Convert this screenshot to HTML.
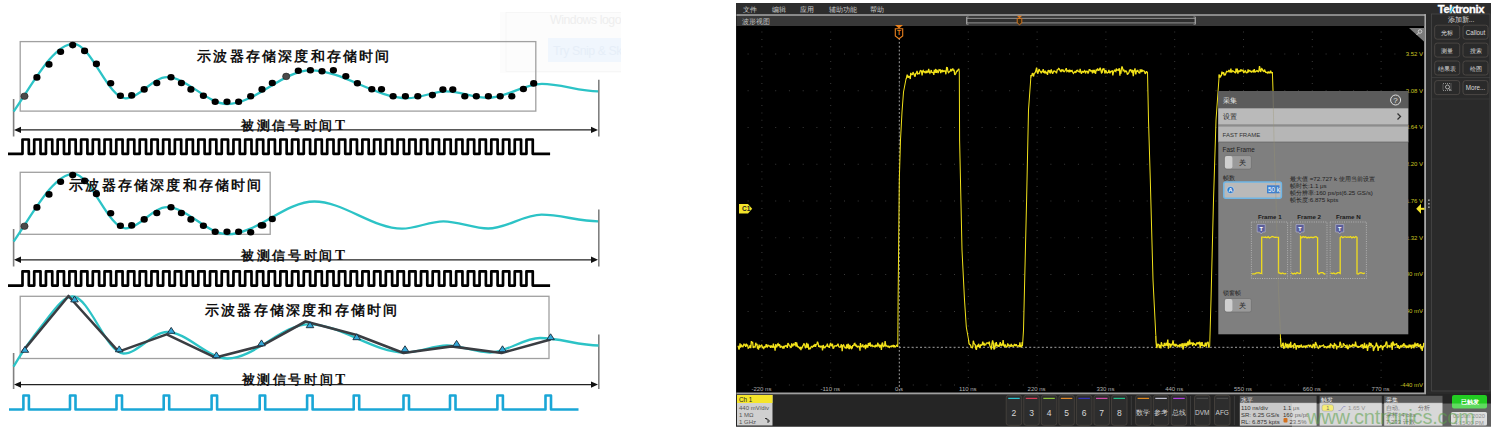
<!DOCTYPE html>
<html><head><meta charset="utf-8"><style>
html,body{margin:0;padding:0;background:#fff;width:1492px;height:433px;overflow:hidden;position:relative}
.cn{font-family:"Liberation Serif",serif;font-weight:bold;fill:#111}
.ui{font-family:"Liberation Sans",sans-serif}
</style></head><body>
<svg width="1492" height="433" style="position:absolute;left:0;top:0"><defs><clipPath id="gp"><rect x="500" y="0" width="121" height="80"/></clipPath></defs><g clip-path="url(#gp)"><rect x="500" y="12" width="130" height="61" fill="#fcfcfc"/><rect x="506" y="12.5" width="130" height="59" fill="none" stroke="#f4f4f4" stroke-width="0.8"/><text x="550" y="24.3" font-family="Liberation Sans" font-size="12.3" letter-spacing="-0.45" fill="#eeeeee">Windows logo key</text><rect x="548" y="38" width="80" height="24" fill="#f0f6fd"/><text x="553" y="54.5" font-family="Liberation Sans" font-size="12.3" letter-spacing="-0.45" fill="#e6eef8">Try Snip &amp; Sketch</text></g><rect x="20.2" y="41.6" width="515.5999999999999" height="69.5" fill="none" stroke="#a0a0a0" stroke-width="1.3"/><line x1="13.6" y1="99" x2="13.6" y2="136.5" stroke="#808080" stroke-width="1.6"/><line x1="598.8" y1="79.7" x2="598.8" y2="136.5" stroke="#808080" stroke-width="1.6"/><line x1="16" y1="129.9" x2="594" y2="129.9" stroke="#222" stroke-width="1.2"/><path d="M14,129.9 L21,126.7 L21,133.1 Z" fill="#111"/><path d="M598,129.9 L591,126.7 L591,133.1 Z" fill="#111"/><path d="M13.6,111.5 C33.6,82.5 53.6,43.8 73.6,43.8 C90.9,43.8 108.2,98.3 125.5,98.3 C139.3,98.3 153.2,77.2 167.0,77.2 C187.1,77.2 207.2,104.1 227.3,104.1 C255.0,104.1 282.8,70.3 310.5,70.3 C342.9,70.3 375.3,98.2 407.7,98.2 C420.6,98.2 433.4,91.3 446.3,91.3 C460.2,91.3 474.0,97.8 487.9,97.8 C505.9,97.8 523.9,83.9 541.9,83.9 C560.6,83.9 579.4,91.4 598.1,91.4" fill="none" stroke="#2cc3c6" stroke-width="2.3"/><ellipse cx="24.5" cy="96.2" rx="3.6" ry="3.3" fill="#4a4a4a" stroke="#222" stroke-width="0.6"/><ellipse cx="36.9" cy="77.4" rx="3.6" ry="3.3" fill="#000" stroke="none" stroke-width="0.6"/><ellipse cx="49" cy="64.4" rx="3.6" ry="3.3" fill="#000" stroke="none" stroke-width="0.6"/><ellipse cx="60.6" cy="51.7" rx="3.6" ry="3.3" fill="#000" stroke="none" stroke-width="0.6"/><ellipse cx="72.7" cy="45.1" rx="3.6" ry="3.3" fill="#000" stroke="none" stroke-width="0.6"/><ellipse cx="84.6" cy="50.9" rx="3.6" ry="3.3" fill="#000" stroke="none" stroke-width="0.6"/><ellipse cx="96.4" cy="63.9" rx="3.6" ry="3.3" fill="#000" stroke="none" stroke-width="0.6"/><ellipse cx="110.7" cy="83.3" rx="3.6" ry="3.3" fill="#000" stroke="none" stroke-width="0.6"/><ellipse cx="120.4" cy="95.8" rx="3.6" ry="3.3" fill="#000" stroke="none" stroke-width="0.6"/><ellipse cx="131.7" cy="95.4" rx="3.6" ry="3.3" fill="#000" stroke="none" stroke-width="0.6"/><ellipse cx="144.2" cy="89.4" rx="3.6" ry="3.3" fill="#000" stroke="none" stroke-width="0.6"/><ellipse cx="156.8" cy="83" rx="3.6" ry="3.3" fill="#000" stroke="none" stroke-width="0.6"/><ellipse cx="171" cy="77.2" rx="3.6" ry="3.3" fill="#000" stroke="none" stroke-width="0.6"/><ellipse cx="181.4" cy="83" rx="3.6" ry="3.3" fill="#000" stroke="none" stroke-width="0.6"/><ellipse cx="190.9" cy="89.4" rx="3.6" ry="3.3" fill="#000" stroke="none" stroke-width="0.6"/><ellipse cx="203.4" cy="95.8" rx="3.6" ry="3.3" fill="#000" stroke="none" stroke-width="0.6"/><ellipse cx="215.2" cy="101.8" rx="3.6" ry="3.3" fill="#000" stroke="none" stroke-width="0.6"/><ellipse cx="227" cy="101.8" rx="3.6" ry="3.3" fill="#000" stroke="none" stroke-width="0.6"/><ellipse cx="238.6" cy="101.8" rx="3.6" ry="3.3" fill="#000" stroke="none" stroke-width="0.6"/><ellipse cx="250.7" cy="96.3" rx="3.6" ry="3.3" fill="#000" stroke="none" stroke-width="0.6"/><ellipse cx="262" cy="89.4" rx="3.6" ry="3.3" fill="#000" stroke="none" stroke-width="0.6"/><ellipse cx="272.3" cy="83" rx="3.6" ry="3.3" fill="#000" stroke="none" stroke-width="0.6"/><ellipse cx="286.2" cy="76.4" rx="3.6" ry="3.3" fill="#4a4a4a" stroke="#222" stroke-width="0.6"/><ellipse cx="298.3" cy="70.8" rx="3.6" ry="3.3" fill="#000" stroke="none" stroke-width="0.6"/><ellipse cx="310.4" cy="70.3" rx="3.6" ry="3.3" fill="#000" stroke="none" stroke-width="0.6"/><ellipse cx="322" cy="71.2" rx="3.6" ry="3.3" fill="#000" stroke="none" stroke-width="0.6"/><ellipse cx="333.4" cy="70.2" rx="3.6" ry="3.3" fill="#000" stroke="none" stroke-width="0.6"/><ellipse cx="345.8" cy="76.3" rx="3.6" ry="3.3" fill="#000" stroke="none" stroke-width="0.6"/><ellipse cx="357.4" cy="83.2" rx="3.6" ry="3.3" fill="#000" stroke="none" stroke-width="0.6"/><ellipse cx="371.8" cy="89.3" rx="3.6" ry="3.3" fill="#000" stroke="none" stroke-width="0.6"/><ellipse cx="381.5" cy="89.3" rx="3.6" ry="3.3" fill="#000" stroke="none" stroke-width="0.6"/><ellipse cx="393.1" cy="96.2" rx="3.6" ry="3.3" fill="#000" stroke="none" stroke-width="0.6"/><ellipse cx="405.4" cy="96.2" rx="3.6" ry="3.3" fill="#000" stroke="none" stroke-width="0.6"/><ellipse cx="417.8" cy="96.2" rx="3.6" ry="3.3" fill="#000" stroke="none" stroke-width="0.6"/><ellipse cx="432.4" cy="95.1" rx="3.6" ry="3.3" fill="#000" stroke="none" stroke-width="0.6"/><ellipse cx="442.9" cy="89.6" rx="3.6" ry="3.3" fill="#000" stroke="none" stroke-width="0.6"/><ellipse cx="452.8" cy="89.6" rx="3.6" ry="3.3" fill="#000" stroke="none" stroke-width="0.6"/><ellipse cx="464.8" cy="96.2" rx="3.6" ry="3.3" fill="#000" stroke="none" stroke-width="0.6"/><ellipse cx="476.3" cy="96.2" rx="3.6" ry="3.3" fill="#000" stroke="none" stroke-width="0.6"/><ellipse cx="488.4" cy="96.2" rx="3.6" ry="3.3" fill="#000" stroke="none" stroke-width="0.6"/><ellipse cx="500.2" cy="96.2" rx="3.6" ry="3.3" fill="#000" stroke="none" stroke-width="0.6"/><ellipse cx="511.8" cy="96.2" rx="3.6" ry="3.3" fill="#000" stroke="none" stroke-width="0.6"/><ellipse cx="523.4" cy="89" rx="3.6" ry="3.3" fill="#000" stroke="none" stroke-width="0.6"/><ellipse cx="533.7" cy="83.4" rx="3.6" ry="3.3" fill="#000" stroke="none" stroke-width="0.6"/><text x="197.3" y="60.6" class="cn" font-size="13.7" letter-spacing="2.2">示波器存储深度和存储时间</text><text x="241.3" y="129.6" class="cn" font-size="13" letter-spacing="2.6">被测信号时间<tspan font-size="15">T</tspan></text><path d="M8,153.8 L22.50,153.8 L22.50,139.5 L28.80,139.5 L28.80,153.8 L34.22,153.8 L34.22,139.5 L40.52,139.5 L40.52,153.8 L45.94,153.8 L45.94,139.5 L52.24,139.5 L52.24,153.8 L57.66,153.8 L57.66,139.5 L63.96,139.5 L63.96,153.8 L69.38,153.8 L69.38,139.5 L75.68,139.5 L75.68,153.8 L81.10,153.8 L81.10,139.5 L87.40,139.5 L87.40,153.8 L92.82,153.8 L92.82,139.5 L99.12,139.5 L99.12,153.8 L104.54,153.8 L104.54,139.5 L110.84,139.5 L110.84,153.8 L116.26,153.8 L116.26,139.5 L122.56,139.5 L122.56,153.8 L127.98,153.8 L127.98,139.5 L134.28,139.5 L134.28,153.8 L139.70,153.8 L139.70,139.5 L146.00,139.5 L146.00,153.8 L151.42,153.8 L151.42,139.5 L157.72,139.5 L157.72,153.8 L163.14,153.8 L163.14,139.5 L169.44,139.5 L169.44,153.8 L174.86,153.8 L174.86,139.5 L181.16,139.5 L181.16,153.8 L186.58,153.8 L186.58,139.5 L192.88,139.5 L192.88,153.8 L198.30,153.8 L198.30,139.5 L204.60,139.5 L204.60,153.8 L210.02,153.8 L210.02,139.5 L216.32,139.5 L216.32,153.8 L221.74,153.8 L221.74,139.5 L228.04,139.5 L228.04,153.8 L233.46,153.8 L233.46,139.5 L239.76,139.5 L239.76,153.8 L245.18,153.8 L245.18,139.5 L251.48,139.5 L251.48,153.8 L256.90,153.8 L256.90,139.5 L263.20,139.5 L263.20,153.8 L268.62,153.8 L268.62,139.5 L274.92,139.5 L274.92,153.8 L280.34,153.8 L280.34,139.5 L286.64,139.5 L286.64,153.8 L292.06,153.8 L292.06,139.5 L298.36,139.5 L298.36,153.8 L303.78,153.8 L303.78,139.5 L310.08,139.5 L310.08,153.8 L315.50,153.8 L315.50,139.5 L321.80,139.5 L321.80,153.8 L327.22,153.8 L327.22,139.5 L333.52,139.5 L333.52,153.8 L338.94,153.8 L338.94,139.5 L345.24,139.5 L345.24,153.8 L350.66,153.8 L350.66,139.5 L356.96,139.5 L356.96,153.8 L362.38,153.8 L362.38,139.5 L368.68,139.5 L368.68,153.8 L374.10,153.8 L374.10,139.5 L380.40,139.5 L380.40,153.8 L385.82,153.8 L385.82,139.5 L392.12,139.5 L392.12,153.8 L397.54,153.8 L397.54,139.5 L403.84,139.5 L403.84,153.8 L409.26,153.8 L409.26,139.5 L415.56,139.5 L415.56,153.8 L420.98,153.8 L420.98,139.5 L427.28,139.5 L427.28,153.8 L432.70,153.8 L432.70,139.5 L439.00,139.5 L439.00,153.8 L444.42,153.8 L444.42,139.5 L450.72,139.5 L450.72,153.8 L456.14,153.8 L456.14,139.5 L462.44,139.5 L462.44,153.8 L467.86,153.8 L467.86,139.5 L474.16,139.5 L474.16,153.8 L479.58,153.8 L479.58,139.5 L485.88,139.5 L485.88,153.8 L491.30,153.8 L491.30,139.5 L497.60,139.5 L497.60,153.8 L503.02,153.8 L503.02,139.5 L509.32,139.5 L509.32,153.8 L514.74,153.8 L514.74,139.5 L521.04,139.5 L521.04,153.8 L526.46,153.8 L526.46,139.5 L532.76,139.5 L532.76,153.8 L550.1,153.8" fill="none" stroke="#000" stroke-width="2.7" stroke-linejoin="round"/><rect x="20.2" y="172.3" width="250.0" height="62.0" fill="none" stroke="#a0a0a0" stroke-width="1.3"/><line x1="13.6" y1="229" x2="13.6" y2="266.5" stroke="#808080" stroke-width="1.6"/><line x1="598.8" y1="209.5" x2="598.8" y2="266.5" stroke="#808080" stroke-width="1.6"/><line x1="16" y1="259.8" x2="594" y2="259.8" stroke="#222" stroke-width="1.2"/><path d="M14,259.8 L21,256.6 L21,263.0 Z" fill="#111"/><path d="M598,259.8 L591,256.6 L591,263.0 Z" fill="#111"/><path d="M13.6,241.5 C33.6,212.5 53.6,173.8 73.6,173.8 C90.9,173.8 108.2,228.3 125.5,228.3 C139.3,228.3 153.2,207.2 167.0,207.2 C187.2,207.2 207.3,234.3 227.5,234.3 C256.4,234.3 285.4,201.5 314.3,201.5 C343.5,201.5 372.8,228.7 402.0,228.7 C415.8,228.7 429.6,221.3 443.4,221.3 C458.3,221.3 473.3,228.5 488.2,228.5 C506.0,228.5 523.8,214.7 541.6,214.7 C560.4,214.7 579.3,221.3 598.1,221.3" fill="none" stroke="#2cc3c6" stroke-width="2.3"/><ellipse cx="24.5" cy="226.2" rx="3.6" ry="3.3" fill="#4a4a4a" stroke="#222" stroke-width="0.6"/><ellipse cx="36.9" cy="207.4" rx="3.6" ry="3.3" fill="#000" stroke="none" stroke-width="0.6"/><ellipse cx="49" cy="194.4" rx="3.6" ry="3.3" fill="#000" stroke="none" stroke-width="0.6"/><ellipse cx="60.6" cy="181.7" rx="3.6" ry="3.3" fill="#000" stroke="none" stroke-width="0.6"/><ellipse cx="72.7" cy="175.1" rx="3.6" ry="3.3" fill="#000" stroke="none" stroke-width="0.6"/><ellipse cx="84.6" cy="180.9" rx="3.6" ry="3.3" fill="#000" stroke="none" stroke-width="0.6"/><ellipse cx="96.4" cy="193.9" rx="3.6" ry="3.3" fill="#000" stroke="none" stroke-width="0.6"/><ellipse cx="110.7" cy="213.3" rx="3.6" ry="3.3" fill="#000" stroke="none" stroke-width="0.6"/><ellipse cx="120.4" cy="225.8" rx="3.6" ry="3.3" fill="#000" stroke="none" stroke-width="0.6"/><ellipse cx="131.7" cy="225.4" rx="3.6" ry="3.3" fill="#000" stroke="none" stroke-width="0.6"/><ellipse cx="144.2" cy="219.4" rx="3.6" ry="3.3" fill="#000" stroke="none" stroke-width="0.6"/><ellipse cx="156.8" cy="213" rx="3.6" ry="3.3" fill="#000" stroke="none" stroke-width="0.6"/><ellipse cx="171" cy="207.2" rx="3.6" ry="3.3" fill="#000" stroke="none" stroke-width="0.6"/><ellipse cx="181.4" cy="213" rx="3.6" ry="3.3" fill="#000" stroke="none" stroke-width="0.6"/><ellipse cx="190.9" cy="219.4" rx="3.6" ry="3.3" fill="#000" stroke="none" stroke-width="0.6"/><ellipse cx="203.4" cy="225.8" rx="3.6" ry="3.3" fill="#000" stroke="none" stroke-width="0.6"/><ellipse cx="215.2" cy="231.8" rx="3.6" ry="3.3" fill="#000" stroke="none" stroke-width="0.6"/><ellipse cx="227" cy="231.8" rx="3.6" ry="3.3" fill="#000" stroke="none" stroke-width="0.6"/><ellipse cx="238.6" cy="231.8" rx="3.6" ry="3.3" fill="#000" stroke="none" stroke-width="0.6"/><ellipse cx="250.7" cy="232.3" rx="3.6" ry="3.3" fill="#000" stroke="none" stroke-width="0.6"/><ellipse cx="262" cy="225.4" rx="4.4" ry="3.3" fill="#000" stroke="none" stroke-width="0.6"/><ellipse cx="272.3" cy="219" rx="3.6" ry="3.3" fill="#000" stroke="none" stroke-width="0.6"/><text x="69.3" y="190.3" class="cn" font-size="13.7" letter-spacing="2.2">示波器存储深度和存储时间</text><text x="241.3" y="259.5" class="cn" font-size="13" letter-spacing="2.6">被测信号时间<tspan font-size="15">T</tspan></text><path d="M8,285.6 L22.50,285.6 L22.50,271.3 L28.80,271.3 L28.80,285.6 L34.22,285.6 L34.22,271.3 L40.52,271.3 L40.52,285.6 L45.94,285.6 L45.94,271.3 L52.24,271.3 L52.24,285.6 L57.66,285.6 L57.66,271.3 L63.96,271.3 L63.96,285.6 L69.38,285.6 L69.38,271.3 L75.68,271.3 L75.68,285.6 L81.10,285.6 L81.10,271.3 L87.40,271.3 L87.40,285.6 L92.82,285.6 L92.82,271.3 L99.12,271.3 L99.12,285.6 L104.54,285.6 L104.54,271.3 L110.84,271.3 L110.84,285.6 L116.26,285.6 L116.26,271.3 L122.56,271.3 L122.56,285.6 L127.98,285.6 L127.98,271.3 L134.28,271.3 L134.28,285.6 L139.70,285.6 L139.70,271.3 L146.00,271.3 L146.00,285.6 L151.42,285.6 L151.42,271.3 L157.72,271.3 L157.72,285.6 L163.14,285.6 L163.14,271.3 L169.44,271.3 L169.44,285.6 L174.86,285.6 L174.86,271.3 L181.16,271.3 L181.16,285.6 L186.58,285.6 L186.58,271.3 L192.88,271.3 L192.88,285.6 L198.30,285.6 L198.30,271.3 L204.60,271.3 L204.60,285.6 L210.02,285.6 L210.02,271.3 L216.32,271.3 L216.32,285.6 L221.74,285.6 L221.74,271.3 L228.04,271.3 L228.04,285.6 L233.46,285.6 L233.46,271.3 L239.76,271.3 L239.76,285.6 L245.18,285.6 L245.18,271.3 L251.48,271.3 L251.48,285.6 L256.90,285.6 L256.90,271.3 L263.20,271.3 L263.20,285.6 L268.62,285.6 L268.62,271.3 L274.92,271.3 L274.92,285.6 L280.34,285.6 L280.34,271.3 L286.64,271.3 L286.64,285.6 L292.06,285.6 L292.06,271.3 L298.36,271.3 L298.36,285.6 L303.78,285.6 L303.78,271.3 L310.08,271.3 L310.08,285.6 L315.50,285.6 L315.50,271.3 L321.80,271.3 L321.80,285.6 L327.22,285.6 L327.22,271.3 L333.52,271.3 L333.52,285.6 L338.94,285.6 L338.94,271.3 L345.24,271.3 L345.24,285.6 L350.66,285.6 L350.66,271.3 L356.96,271.3 L356.96,285.6 L362.38,285.6 L362.38,271.3 L368.68,271.3 L368.68,285.6 L374.10,285.6 L374.10,271.3 L380.40,271.3 L380.40,285.6 L385.82,285.6 L385.82,271.3 L392.12,271.3 L392.12,285.6 L397.54,285.6 L397.54,271.3 L403.84,271.3 L403.84,285.6 L409.26,285.6 L409.26,271.3 L415.56,271.3 L415.56,285.6 L420.98,285.6 L420.98,271.3 L427.28,271.3 L427.28,285.6 L432.70,285.6 L432.70,271.3 L439.00,271.3 L439.00,285.6 L444.42,285.6 L444.42,271.3 L450.72,271.3 L450.72,285.6 L456.14,285.6 L456.14,271.3 L462.44,271.3 L462.44,285.6 L467.86,285.6 L467.86,271.3 L474.16,271.3 L474.16,285.6 L479.58,285.6 L479.58,271.3 L485.88,271.3 L485.88,285.6 L491.30,285.6 L491.30,271.3 L497.60,271.3 L497.60,285.6 L503.02,285.6 L503.02,271.3 L509.32,271.3 L509.32,285.6 L514.74,285.6 L514.74,271.3 L521.04,271.3 L521.04,285.6 L526.46,285.6 L526.46,271.3 L532.76,271.3 L532.76,285.6 L550.1,285.6" fill="none" stroke="#000" stroke-width="2.7" stroke-linejoin="round"/><rect x="20.2" y="296.3" width="528.8" height="62.19999999999999" fill="none" stroke="#a0a0a0" stroke-width="1.3"/><line x1="13.6" y1="353" x2="13.6" y2="389" stroke="#808080" stroke-width="1.6"/><line x1="598.8" y1="334.4" x2="598.8" y2="389" stroke="#808080" stroke-width="1.6"/><line x1="16" y1="384.6" x2="594" y2="384.6" stroke="#222" stroke-width="1.2"/><path d="M14,384.6 L21,381.40000000000003 L21,387.8 Z" fill="#111"/><path d="M598,384.6 L591,381.40000000000003 L591,387.8 Z" fill="#111"/><path d="M13.5,366.6 C23.0,350.5 32.5,337.4 42.0,325.5 C52.2,312.8 62.3,296.5 72.5,296.5 C89.5,296.5 106.5,353.5 123.5,353.5 C138.0,353.5 152.5,332.0 167.0,332.0 C187.2,332.0 207.3,358.5 227.5,358.5 C254.7,358.5 281.8,324.3 309.0,324.3 C341.0,324.3 373.0,352.5 405.0,352.5 C419.0,352.5 433.0,345.5 447.0,345.5 C461.3,345.5 475.7,352.5 490.0,352.5 C506.7,352.5 523.3,338.0 540.0,338.0 C559.5,338.0 579.1,345.5 598.6,345.5" fill="none" stroke="#2cc3c6" stroke-width="2.3"/><polyline points="22.5,351.6 68.5,296 118.6,351.6 166.7,334.4 215.5,357.6 262,345.6 305.6,321.5 356.7,335 403.5,353 451.5,346.4 501.6,353 550.6,339.5" fill="none" stroke="#3a3d42" stroke-width="2.6" stroke-linejoin="round"/><path d="M24.9,346.4 L28.7,352.3 L21.099999999999998,352.3 Z" fill="#33a8d8" stroke="#1a2a38" stroke-width="0.9"/><path d="M74.5,296.0 L78.3,301.90000000000003 L70.7,301.90000000000003 Z" fill="#33a8d8" stroke="#1a2a38" stroke-width="0.9"/><path d="M119.2,345.9 L123.0,351.8 L115.4,351.8 Z" fill="#33a8d8" stroke="#1a2a38" stroke-width="0.9"/><path d="M171.2,327.4 L175.0,333.3 L167.39999999999998,333.3 Z" fill="#33a8d8" stroke="#1a2a38" stroke-width="0.9"/><path d="M216.4,351.9 L220.20000000000002,357.8 L212.6,357.8 Z" fill="#33a8d8" stroke="#1a2a38" stroke-width="0.9"/><path d="M261.5,339.9 L265.3,345.8 L257.7,345.8 Z" fill="#33a8d8" stroke="#1a2a38" stroke-width="0.9"/><path d="M310,321.79999999999995 L313.8,327.7 L306.2,327.7 Z" fill="#33a8d8" stroke="#1a2a38" stroke-width="0.9"/><path d="M356.7,333.79999999999995 L360.5,339.7 L352.9,339.7 Z" fill="#33a8d8" stroke="#1a2a38" stroke-width="0.9"/><path d="M405,345.79999999999995 L408.8,351.7 L401.2,351.7 Z" fill="#33a8d8" stroke="#1a2a38" stroke-width="0.9"/><path d="M456.6,340.4 L460.40000000000003,346.3 L452.8,346.3 Z" fill="#33a8d8" stroke="#1a2a38" stroke-width="0.9"/><path d="M502.5,345.79999999999995 L506.3,351.7 L498.7,351.7 Z" fill="#33a8d8" stroke="#1a2a38" stroke-width="0.9"/><path d="M550.6,333.79999999999995 L554.4,339.7 L546.8000000000001,339.7 Z" fill="#33a8d8" stroke="#1a2a38" stroke-width="0.9"/><text x="205" y="314.5" class="cn" font-size="13.7" letter-spacing="2.2">示波器存储深度和存储时间</text><text x="241.7" y="384.3" class="cn" font-size="13" letter-spacing="2.6">被测信号时间<tspan font-size="15">T</tspan></text><path d="M9,409.5 L23.4,409.5 L23.4,395.5 L28.9,395.5 L28.9,409.5 L70,409.5 L70,395.5 L75.5,395.5 L75.5,409.5 L116.5,409.5 L116.5,395.5 L122.0,395.5 L122.0,409.5 L163.7,409.5 L163.7,395.5 L169.2,395.5 L169.2,409.5 L211.6,409.5 L211.6,395.5 L217.1,395.5 L217.1,409.5 L259.7,409.5 L259.7,395.5 L265.2,395.5 L265.2,409.5 L307.1,409.5 L307.1,395.5 L312.6,395.5 L312.6,409.5 L353.7,409.5 L353.7,395.5 L359.2,395.5 L359.2,409.5 L403.5,409.5 L403.5,395.5 L409.0,395.5 L409.0,409.5 L450,409.5 L450,395.5 L455.5,395.5 L455.5,409.5 L497.4,409.5 L497.4,395.5 L502.9,395.5 L502.9,409.5 L545.5,409.5 L545.5,395.5 L551.0,395.5 L551.0,409.5 L578.5,409.5" fill="none" stroke="#1aa6d6" stroke-width="2.6" stroke-linejoin="round"/><rect x="736" y="3" width="755" height="423.5" fill="#2a2a2a"/><rect x="736" y="3" width="755" height="11" fill="#2d2d2d"/><text x="743.4" y="12" class="ui" font-size="7" fill="#c8c8c8">文件</text><text x="771.6" y="12" class="ui" font-size="7" fill="#c8c8c8">编辑</text><text x="800" y="12" class="ui" font-size="7" fill="#c8c8c8">应用</text><text x="828.5" y="12" class="ui" font-size="7" fill="#c8c8c8">辅助功能</text><text x="869.5" y="12" class="ui" font-size="7" fill="#c8c8c8">帮助</text><rect x="736.4" y="14.2" width="689.6" height="379.8" fill="#000"/><rect x="736.4" y="14.2" width="689.6" height="1.7" fill="#a8a8a8"/><rect x="1424.2" y="14.2" width="1.8" height="379.8" fill="#a8a8a8"/><rect x="736.4" y="15.9" width="687.8" height="10.1" fill="#383838"/><text x="742" y="23.5" class="ui" font-size="6.8" fill="#c0c0c0">波形视图</text><rect x="967" y="18.3" width="228" height="4.6" fill="#2e2e2e" stroke="#a8a8a8" stroke-width="0.8"/><path d="M968.5,17 L966.5,17 L966.5,24.2 L968.5,24.2 M1193.5,17 L1195.5,17 L1195.5,24.2 L1193.5,24.2" fill="none" stroke="#a8a8a8" stroke-width="0.8"/><path d="M1016.8,15.8 L1022.2,15.8 L1019.5,18.2 Z" fill="#e07b20"/><path d="M1017.2,18.5 h4.6 v4.4 l-2.3,1.8 l-2.3,-1.8 z" fill="#3a2a10" stroke="#e07b20" stroke-width="0.9"/><path d="M761.4,31.6h1v1h-1zM761.4,38.9h1v1h-1zM761.4,46.2h1v1h-1zM761.4,53.6h1v1h-1zM761.4,61.0h1v1h-1zM761.4,68.3h1v1h-1zM761.4,75.7h1v1h-1zM761.4,83.0h1v1h-1zM761.4,90.3h1v1h-1zM761.4,97.7h1v1h-1zM761.4,105.0h1v1h-1zM761.4,112.4h1v1h-1zM761.4,119.8h1v1h-1zM761.4,127.1h1v1h-1zM761.4,134.4h1v1h-1zM761.4,141.8h1v1h-1zM761.4,149.2h1v1h-1zM761.4,156.5h1v1h-1zM761.4,163.8h1v1h-1zM761.4,171.2h1v1h-1zM761.4,178.5h1v1h-1zM761.4,185.9h1v1h-1zM761.4,193.2h1v1h-1zM761.4,200.6h1v1h-1zM761.4,207.9h1v1h-1zM761.4,215.3h1v1h-1zM761.4,222.6h1v1h-1zM761.4,230.0h1v1h-1zM761.4,237.3h1v1h-1zM761.4,244.7h1v1h-1zM761.4,252.0h1v1h-1zM761.4,259.4h1v1h-1zM761.4,266.8h1v1h-1zM761.4,274.1h1v1h-1zM761.4,281.4h1v1h-1zM761.4,288.8h1v1h-1zM761.4,296.1h1v1h-1zM761.4,303.5h1v1h-1zM761.4,310.9h1v1h-1zM761.4,318.2h1v1h-1zM761.4,325.6h1v1h-1zM761.4,332.9h1v1h-1zM761.4,340.2h1v1h-1zM761.4,347.6h1v1h-1zM761.4,354.9h1v1h-1zM761.4,362.3h1v1h-1zM761.4,369.7h1v1h-1zM761.4,377.0h1v1h-1zM761.4,384.4h1v1h-1zM761.4,391.7h1v1h-1zM830.2,31.6h1v1h-1zM830.2,38.9h1v1h-1zM830.2,46.2h1v1h-1zM830.2,53.6h1v1h-1zM830.2,61.0h1v1h-1zM830.2,68.3h1v1h-1zM830.2,75.7h1v1h-1zM830.2,83.0h1v1h-1zM830.2,90.3h1v1h-1zM830.2,97.7h1v1h-1zM830.2,105.0h1v1h-1zM830.2,112.4h1v1h-1zM830.2,119.8h1v1h-1zM830.2,127.1h1v1h-1zM830.2,134.4h1v1h-1zM830.2,141.8h1v1h-1zM830.2,149.2h1v1h-1zM830.2,156.5h1v1h-1zM830.2,163.8h1v1h-1zM830.2,171.2h1v1h-1zM830.2,178.5h1v1h-1zM830.2,185.9h1v1h-1zM830.2,193.2h1v1h-1zM830.2,200.6h1v1h-1zM830.2,207.9h1v1h-1zM830.2,215.3h1v1h-1zM830.2,222.6h1v1h-1zM830.2,230.0h1v1h-1zM830.2,237.3h1v1h-1zM830.2,244.7h1v1h-1zM830.2,252.0h1v1h-1zM830.2,259.4h1v1h-1zM830.2,266.8h1v1h-1zM830.2,274.1h1v1h-1zM830.2,281.4h1v1h-1zM830.2,288.8h1v1h-1zM830.2,296.1h1v1h-1zM830.2,303.5h1v1h-1zM830.2,310.9h1v1h-1zM830.2,318.2h1v1h-1zM830.2,325.6h1v1h-1zM830.2,332.9h1v1h-1zM830.2,340.2h1v1h-1zM830.2,347.6h1v1h-1zM830.2,354.9h1v1h-1zM830.2,362.3h1v1h-1zM830.2,369.7h1v1h-1zM830.2,377.0h1v1h-1zM830.2,384.4h1v1h-1zM830.2,391.7h1v1h-1zM899.0,31.6h1v1h-1zM899.0,38.9h1v1h-1zM899.0,46.2h1v1h-1zM899.0,53.6h1v1h-1zM899.0,61.0h1v1h-1zM899.0,68.3h1v1h-1zM899.0,75.7h1v1h-1zM899.0,83.0h1v1h-1zM899.0,90.3h1v1h-1zM899.0,97.7h1v1h-1zM899.0,105.0h1v1h-1zM899.0,112.4h1v1h-1zM899.0,119.8h1v1h-1zM899.0,127.1h1v1h-1zM899.0,134.4h1v1h-1zM899.0,141.8h1v1h-1zM899.0,149.2h1v1h-1zM899.0,156.5h1v1h-1zM899.0,163.8h1v1h-1zM899.0,171.2h1v1h-1zM899.0,178.5h1v1h-1zM899.0,185.9h1v1h-1zM899.0,193.2h1v1h-1zM899.0,200.6h1v1h-1zM899.0,207.9h1v1h-1zM899.0,215.3h1v1h-1zM899.0,222.6h1v1h-1zM899.0,230.0h1v1h-1zM899.0,237.3h1v1h-1zM899.0,244.7h1v1h-1zM899.0,252.0h1v1h-1zM899.0,259.4h1v1h-1zM899.0,266.8h1v1h-1zM899.0,274.1h1v1h-1zM899.0,281.4h1v1h-1zM899.0,288.8h1v1h-1zM899.0,296.1h1v1h-1zM899.0,303.5h1v1h-1zM899.0,310.9h1v1h-1zM899.0,318.2h1v1h-1zM899.0,325.6h1v1h-1zM899.0,332.9h1v1h-1zM899.0,340.2h1v1h-1zM899.0,347.6h1v1h-1zM899.0,354.9h1v1h-1zM899.0,362.3h1v1h-1zM899.0,369.7h1v1h-1zM899.0,377.0h1v1h-1zM899.0,384.4h1v1h-1zM899.0,391.7h1v1h-1zM967.8,31.6h1v1h-1zM967.8,38.9h1v1h-1zM967.8,46.2h1v1h-1zM967.8,53.6h1v1h-1zM967.8,61.0h1v1h-1zM967.8,68.3h1v1h-1zM967.8,75.7h1v1h-1zM967.8,83.0h1v1h-1zM967.8,90.3h1v1h-1zM967.8,97.7h1v1h-1zM967.8,105.0h1v1h-1zM967.8,112.4h1v1h-1zM967.8,119.8h1v1h-1zM967.8,127.1h1v1h-1zM967.8,134.4h1v1h-1zM967.8,141.8h1v1h-1zM967.8,149.2h1v1h-1zM967.8,156.5h1v1h-1zM967.8,163.8h1v1h-1zM967.8,171.2h1v1h-1zM967.8,178.5h1v1h-1zM967.8,185.9h1v1h-1zM967.8,193.2h1v1h-1zM967.8,200.6h1v1h-1zM967.8,207.9h1v1h-1zM967.8,215.3h1v1h-1zM967.8,222.6h1v1h-1zM967.8,230.0h1v1h-1zM967.8,237.3h1v1h-1zM967.8,244.7h1v1h-1zM967.8,252.0h1v1h-1zM967.8,259.4h1v1h-1zM967.8,266.8h1v1h-1zM967.8,274.1h1v1h-1zM967.8,281.4h1v1h-1zM967.8,288.8h1v1h-1zM967.8,296.1h1v1h-1zM967.8,303.5h1v1h-1zM967.8,310.9h1v1h-1zM967.8,318.2h1v1h-1zM967.8,325.6h1v1h-1zM967.8,332.9h1v1h-1zM967.8,340.2h1v1h-1zM967.8,347.6h1v1h-1zM967.8,354.9h1v1h-1zM967.8,362.3h1v1h-1zM967.8,369.7h1v1h-1zM967.8,377.0h1v1h-1zM967.8,384.4h1v1h-1zM967.8,391.7h1v1h-1zM1036.6,31.6h1v1h-1zM1036.6,38.9h1v1h-1zM1036.6,46.2h1v1h-1zM1036.6,53.6h1v1h-1zM1036.6,61.0h1v1h-1zM1036.6,68.3h1v1h-1zM1036.6,75.7h1v1h-1zM1036.6,83.0h1v1h-1zM1036.6,90.3h1v1h-1zM1036.6,97.7h1v1h-1zM1036.6,105.0h1v1h-1zM1036.6,112.4h1v1h-1zM1036.6,119.8h1v1h-1zM1036.6,127.1h1v1h-1zM1036.6,134.4h1v1h-1zM1036.6,141.8h1v1h-1zM1036.6,149.2h1v1h-1zM1036.6,156.5h1v1h-1zM1036.6,163.8h1v1h-1zM1036.6,171.2h1v1h-1zM1036.6,178.5h1v1h-1zM1036.6,185.9h1v1h-1zM1036.6,193.2h1v1h-1zM1036.6,200.6h1v1h-1zM1036.6,207.9h1v1h-1zM1036.6,215.3h1v1h-1zM1036.6,222.6h1v1h-1zM1036.6,230.0h1v1h-1zM1036.6,237.3h1v1h-1zM1036.6,244.7h1v1h-1zM1036.6,252.0h1v1h-1zM1036.6,259.4h1v1h-1zM1036.6,266.8h1v1h-1zM1036.6,274.1h1v1h-1zM1036.6,281.4h1v1h-1zM1036.6,288.8h1v1h-1zM1036.6,296.1h1v1h-1zM1036.6,303.5h1v1h-1zM1036.6,310.9h1v1h-1zM1036.6,318.2h1v1h-1zM1036.6,325.6h1v1h-1zM1036.6,332.9h1v1h-1zM1036.6,340.2h1v1h-1zM1036.6,347.6h1v1h-1zM1036.6,354.9h1v1h-1zM1036.6,362.3h1v1h-1zM1036.6,369.7h1v1h-1zM1036.6,377.0h1v1h-1zM1036.6,384.4h1v1h-1zM1036.6,391.7h1v1h-1zM1105.4,31.6h1v1h-1zM1105.4,38.9h1v1h-1zM1105.4,46.2h1v1h-1zM1105.4,53.6h1v1h-1zM1105.4,61.0h1v1h-1zM1105.4,68.3h1v1h-1zM1105.4,75.7h1v1h-1zM1105.4,83.0h1v1h-1zM1105.4,90.3h1v1h-1zM1105.4,97.7h1v1h-1zM1105.4,105.0h1v1h-1zM1105.4,112.4h1v1h-1zM1105.4,119.8h1v1h-1zM1105.4,127.1h1v1h-1zM1105.4,134.4h1v1h-1zM1105.4,141.8h1v1h-1zM1105.4,149.2h1v1h-1zM1105.4,156.5h1v1h-1zM1105.4,163.8h1v1h-1zM1105.4,171.2h1v1h-1zM1105.4,178.5h1v1h-1zM1105.4,185.9h1v1h-1zM1105.4,193.2h1v1h-1zM1105.4,200.6h1v1h-1zM1105.4,207.9h1v1h-1zM1105.4,215.3h1v1h-1zM1105.4,222.6h1v1h-1zM1105.4,230.0h1v1h-1zM1105.4,237.3h1v1h-1zM1105.4,244.7h1v1h-1zM1105.4,252.0h1v1h-1zM1105.4,259.4h1v1h-1zM1105.4,266.8h1v1h-1zM1105.4,274.1h1v1h-1zM1105.4,281.4h1v1h-1zM1105.4,288.8h1v1h-1zM1105.4,296.1h1v1h-1zM1105.4,303.5h1v1h-1zM1105.4,310.9h1v1h-1zM1105.4,318.2h1v1h-1zM1105.4,325.6h1v1h-1zM1105.4,332.9h1v1h-1zM1105.4,340.2h1v1h-1zM1105.4,347.6h1v1h-1zM1105.4,354.9h1v1h-1zM1105.4,362.3h1v1h-1zM1105.4,369.7h1v1h-1zM1105.4,377.0h1v1h-1zM1105.4,384.4h1v1h-1zM1105.4,391.7h1v1h-1zM1174.2,31.6h1v1h-1zM1174.2,38.9h1v1h-1zM1174.2,46.2h1v1h-1zM1174.2,53.6h1v1h-1zM1174.2,61.0h1v1h-1zM1174.2,68.3h1v1h-1zM1174.2,75.7h1v1h-1zM1174.2,83.0h1v1h-1zM1174.2,90.3h1v1h-1zM1174.2,97.7h1v1h-1zM1174.2,105.0h1v1h-1zM1174.2,112.4h1v1h-1zM1174.2,119.8h1v1h-1zM1174.2,127.1h1v1h-1zM1174.2,134.4h1v1h-1zM1174.2,141.8h1v1h-1zM1174.2,149.2h1v1h-1zM1174.2,156.5h1v1h-1zM1174.2,163.8h1v1h-1zM1174.2,171.2h1v1h-1zM1174.2,178.5h1v1h-1zM1174.2,185.9h1v1h-1zM1174.2,193.2h1v1h-1zM1174.2,200.6h1v1h-1zM1174.2,207.9h1v1h-1zM1174.2,215.3h1v1h-1zM1174.2,222.6h1v1h-1zM1174.2,230.0h1v1h-1zM1174.2,237.3h1v1h-1zM1174.2,244.7h1v1h-1zM1174.2,252.0h1v1h-1zM1174.2,259.4h1v1h-1zM1174.2,266.8h1v1h-1zM1174.2,274.1h1v1h-1zM1174.2,281.4h1v1h-1zM1174.2,288.8h1v1h-1zM1174.2,296.1h1v1h-1zM1174.2,303.5h1v1h-1zM1174.2,310.9h1v1h-1zM1174.2,318.2h1v1h-1zM1174.2,325.6h1v1h-1zM1174.2,332.9h1v1h-1zM1174.2,340.2h1v1h-1zM1174.2,347.6h1v1h-1zM1174.2,354.9h1v1h-1zM1174.2,362.3h1v1h-1zM1174.2,369.7h1v1h-1zM1174.2,377.0h1v1h-1zM1174.2,384.4h1v1h-1zM1174.2,391.7h1v1h-1zM1243.0,31.6h1v1h-1zM1243.0,38.9h1v1h-1zM1243.0,46.2h1v1h-1zM1243.0,53.6h1v1h-1zM1243.0,61.0h1v1h-1zM1243.0,68.3h1v1h-1zM1243.0,75.7h1v1h-1zM1243.0,83.0h1v1h-1zM1243.0,90.3h1v1h-1zM1243.0,97.7h1v1h-1zM1243.0,105.0h1v1h-1zM1243.0,112.4h1v1h-1zM1243.0,119.8h1v1h-1zM1243.0,127.1h1v1h-1zM1243.0,134.4h1v1h-1zM1243.0,141.8h1v1h-1zM1243.0,149.2h1v1h-1zM1243.0,156.5h1v1h-1zM1243.0,163.8h1v1h-1zM1243.0,171.2h1v1h-1zM1243.0,178.5h1v1h-1zM1243.0,185.9h1v1h-1zM1243.0,193.2h1v1h-1zM1243.0,200.6h1v1h-1zM1243.0,207.9h1v1h-1zM1243.0,215.3h1v1h-1zM1243.0,222.6h1v1h-1zM1243.0,230.0h1v1h-1zM1243.0,237.3h1v1h-1zM1243.0,244.7h1v1h-1zM1243.0,252.0h1v1h-1zM1243.0,259.4h1v1h-1zM1243.0,266.8h1v1h-1zM1243.0,274.1h1v1h-1zM1243.0,281.4h1v1h-1zM1243.0,288.8h1v1h-1zM1243.0,296.1h1v1h-1zM1243.0,303.5h1v1h-1zM1243.0,310.9h1v1h-1zM1243.0,318.2h1v1h-1zM1243.0,325.6h1v1h-1zM1243.0,332.9h1v1h-1zM1243.0,340.2h1v1h-1zM1243.0,347.6h1v1h-1zM1243.0,354.9h1v1h-1zM1243.0,362.3h1v1h-1zM1243.0,369.7h1v1h-1zM1243.0,377.0h1v1h-1zM1243.0,384.4h1v1h-1zM1243.0,391.7h1v1h-1zM1311.8,31.6h1v1h-1zM1311.8,38.9h1v1h-1zM1311.8,46.2h1v1h-1zM1311.8,53.6h1v1h-1zM1311.8,61.0h1v1h-1zM1311.8,68.3h1v1h-1zM1311.8,75.7h1v1h-1zM1311.8,83.0h1v1h-1zM1311.8,90.3h1v1h-1zM1311.8,97.7h1v1h-1zM1311.8,105.0h1v1h-1zM1311.8,112.4h1v1h-1zM1311.8,119.8h1v1h-1zM1311.8,127.1h1v1h-1zM1311.8,134.4h1v1h-1zM1311.8,141.8h1v1h-1zM1311.8,149.2h1v1h-1zM1311.8,156.5h1v1h-1zM1311.8,163.8h1v1h-1zM1311.8,171.2h1v1h-1zM1311.8,178.5h1v1h-1zM1311.8,185.9h1v1h-1zM1311.8,193.2h1v1h-1zM1311.8,200.6h1v1h-1zM1311.8,207.9h1v1h-1zM1311.8,215.3h1v1h-1zM1311.8,222.6h1v1h-1zM1311.8,230.0h1v1h-1zM1311.8,237.3h1v1h-1zM1311.8,244.7h1v1h-1zM1311.8,252.0h1v1h-1zM1311.8,259.4h1v1h-1zM1311.8,266.8h1v1h-1zM1311.8,274.1h1v1h-1zM1311.8,281.4h1v1h-1zM1311.8,288.8h1v1h-1zM1311.8,296.1h1v1h-1zM1311.8,303.5h1v1h-1zM1311.8,310.9h1v1h-1zM1311.8,318.2h1v1h-1zM1311.8,325.6h1v1h-1zM1311.8,332.9h1v1h-1zM1311.8,340.2h1v1h-1zM1311.8,347.6h1v1h-1zM1311.8,354.9h1v1h-1zM1311.8,362.3h1v1h-1zM1311.8,369.7h1v1h-1zM1311.8,377.0h1v1h-1zM1311.8,384.4h1v1h-1zM1311.8,391.7h1v1h-1zM1380.6,31.6h1v1h-1zM1380.6,38.9h1v1h-1zM1380.6,46.2h1v1h-1zM1380.6,53.6h1v1h-1zM1380.6,61.0h1v1h-1zM1380.6,68.3h1v1h-1zM1380.6,75.7h1v1h-1zM1380.6,83.0h1v1h-1zM1380.6,90.3h1v1h-1zM1380.6,97.7h1v1h-1zM1380.6,105.0h1v1h-1zM1380.6,112.4h1v1h-1zM1380.6,119.8h1v1h-1zM1380.6,127.1h1v1h-1zM1380.6,134.4h1v1h-1zM1380.6,141.8h1v1h-1zM1380.6,149.2h1v1h-1zM1380.6,156.5h1v1h-1zM1380.6,163.8h1v1h-1zM1380.6,171.2h1v1h-1zM1380.6,178.5h1v1h-1zM1380.6,185.9h1v1h-1zM1380.6,193.2h1v1h-1zM1380.6,200.6h1v1h-1zM1380.6,207.9h1v1h-1zM1380.6,215.3h1v1h-1zM1380.6,222.6h1v1h-1zM1380.6,230.0h1v1h-1zM1380.6,237.3h1v1h-1zM1380.6,244.7h1v1h-1zM1380.6,252.0h1v1h-1zM1380.6,259.4h1v1h-1zM1380.6,266.8h1v1h-1zM1380.6,274.1h1v1h-1zM1380.6,281.4h1v1h-1zM1380.6,288.8h1v1h-1zM1380.6,296.1h1v1h-1zM1380.6,303.5h1v1h-1zM1380.6,310.9h1v1h-1zM1380.6,318.2h1v1h-1zM1380.6,325.6h1v1h-1zM1380.6,332.9h1v1h-1zM1380.6,340.2h1v1h-1zM1380.6,347.6h1v1h-1zM1380.6,354.9h1v1h-1zM1380.6,362.3h1v1h-1zM1380.6,369.7h1v1h-1zM1380.6,377.0h1v1h-1zM1380.6,384.4h1v1h-1zM1380.6,391.7h1v1h-1zM747.6,53.6h1v1h-1zM761.4,53.6h1v1h-1zM775.2,53.6h1v1h-1zM788.9,53.6h1v1h-1zM802.7,53.6h1v1h-1zM816.4,53.6h1v1h-1zM830.2,53.6h1v1h-1zM844.0,53.6h1v1h-1zM857.7,53.6h1v1h-1zM871.5,53.6h1v1h-1zM885.2,53.6h1v1h-1zM899.0,53.6h1v1h-1zM912.8,53.6h1v1h-1zM926.5,53.6h1v1h-1zM940.3,53.6h1v1h-1zM954.0,53.6h1v1h-1zM967.8,53.6h1v1h-1zM981.6,53.6h1v1h-1zM995.3,53.6h1v1h-1zM1009.1,53.6h1v1h-1zM1022.8,53.6h1v1h-1zM1036.6,53.6h1v1h-1zM1050.4,53.6h1v1h-1zM1064.1,53.6h1v1h-1zM1077.9,53.6h1v1h-1zM1091.6,53.6h1v1h-1zM1105.4,53.6h1v1h-1zM1119.2,53.6h1v1h-1zM1132.9,53.6h1v1h-1zM1146.7,53.6h1v1h-1zM1160.4,53.6h1v1h-1zM1174.2,53.6h1v1h-1zM1188.0,53.6h1v1h-1zM1201.7,53.6h1v1h-1zM1215.5,53.6h1v1h-1zM1229.2,53.6h1v1h-1zM1243.0,53.6h1v1h-1zM1256.8,53.6h1v1h-1zM1270.5,53.6h1v1h-1zM1284.3,53.6h1v1h-1zM1298.0,53.6h1v1h-1zM1311.8,53.6h1v1h-1zM1325.6,53.6h1v1h-1zM1339.3,53.6h1v1h-1zM1353.1,53.6h1v1h-1zM1366.8,53.6h1v1h-1zM1380.6,53.6h1v1h-1zM1394.4,53.6h1v1h-1zM1408.1,53.6h1v1h-1zM1421.9,53.6h1v1h-1zM747.6,90.3h1v1h-1zM761.4,90.3h1v1h-1zM775.2,90.3h1v1h-1zM788.9,90.3h1v1h-1zM802.7,90.3h1v1h-1zM816.4,90.3h1v1h-1zM830.2,90.3h1v1h-1zM844.0,90.3h1v1h-1zM857.7,90.3h1v1h-1zM871.5,90.3h1v1h-1zM885.2,90.3h1v1h-1zM899.0,90.3h1v1h-1zM912.8,90.3h1v1h-1zM926.5,90.3h1v1h-1zM940.3,90.3h1v1h-1zM954.0,90.3h1v1h-1zM967.8,90.3h1v1h-1zM981.6,90.3h1v1h-1zM995.3,90.3h1v1h-1zM1009.1,90.3h1v1h-1zM1022.8,90.3h1v1h-1zM1036.6,90.3h1v1h-1zM1050.4,90.3h1v1h-1zM1064.1,90.3h1v1h-1zM1077.9,90.3h1v1h-1zM1091.6,90.3h1v1h-1zM1105.4,90.3h1v1h-1zM1119.2,90.3h1v1h-1zM1132.9,90.3h1v1h-1zM1146.7,90.3h1v1h-1zM1160.4,90.3h1v1h-1zM1174.2,90.3h1v1h-1zM1188.0,90.3h1v1h-1zM1201.7,90.3h1v1h-1zM1215.5,90.3h1v1h-1zM1229.2,90.3h1v1h-1zM1243.0,90.3h1v1h-1zM1256.8,90.3h1v1h-1zM1270.5,90.3h1v1h-1zM1284.3,90.3h1v1h-1zM1298.0,90.3h1v1h-1zM1311.8,90.3h1v1h-1zM1325.6,90.3h1v1h-1zM1339.3,90.3h1v1h-1zM1353.1,90.3h1v1h-1zM1366.8,90.3h1v1h-1zM1380.6,90.3h1v1h-1zM1394.4,90.3h1v1h-1zM1408.1,90.3h1v1h-1zM1421.9,90.3h1v1h-1zM747.6,127.1h1v1h-1zM761.4,127.1h1v1h-1zM775.2,127.1h1v1h-1zM788.9,127.1h1v1h-1zM802.7,127.1h1v1h-1zM816.4,127.1h1v1h-1zM830.2,127.1h1v1h-1zM844.0,127.1h1v1h-1zM857.7,127.1h1v1h-1zM871.5,127.1h1v1h-1zM885.2,127.1h1v1h-1zM899.0,127.1h1v1h-1zM912.8,127.1h1v1h-1zM926.5,127.1h1v1h-1zM940.3,127.1h1v1h-1zM954.0,127.1h1v1h-1zM967.8,127.1h1v1h-1zM981.6,127.1h1v1h-1zM995.3,127.1h1v1h-1zM1009.1,127.1h1v1h-1zM1022.8,127.1h1v1h-1zM1036.6,127.1h1v1h-1zM1050.4,127.1h1v1h-1zM1064.1,127.1h1v1h-1zM1077.9,127.1h1v1h-1zM1091.6,127.1h1v1h-1zM1105.4,127.1h1v1h-1zM1119.2,127.1h1v1h-1zM1132.9,127.1h1v1h-1zM1146.7,127.1h1v1h-1zM1160.4,127.1h1v1h-1zM1174.2,127.1h1v1h-1zM1188.0,127.1h1v1h-1zM1201.7,127.1h1v1h-1zM1215.5,127.1h1v1h-1zM1229.2,127.1h1v1h-1zM1243.0,127.1h1v1h-1zM1256.8,127.1h1v1h-1zM1270.5,127.1h1v1h-1zM1284.3,127.1h1v1h-1zM1298.0,127.1h1v1h-1zM1311.8,127.1h1v1h-1zM1325.6,127.1h1v1h-1zM1339.3,127.1h1v1h-1zM1353.1,127.1h1v1h-1zM1366.8,127.1h1v1h-1zM1380.6,127.1h1v1h-1zM1394.4,127.1h1v1h-1zM1408.1,127.1h1v1h-1zM1421.9,127.1h1v1h-1zM747.6,163.8h1v1h-1zM761.4,163.8h1v1h-1zM775.2,163.8h1v1h-1zM788.9,163.8h1v1h-1zM802.7,163.8h1v1h-1zM816.4,163.8h1v1h-1zM830.2,163.8h1v1h-1zM844.0,163.8h1v1h-1zM857.7,163.8h1v1h-1zM871.5,163.8h1v1h-1zM885.2,163.8h1v1h-1zM899.0,163.8h1v1h-1zM912.8,163.8h1v1h-1zM926.5,163.8h1v1h-1zM940.3,163.8h1v1h-1zM954.0,163.8h1v1h-1zM967.8,163.8h1v1h-1zM981.6,163.8h1v1h-1zM995.3,163.8h1v1h-1zM1009.1,163.8h1v1h-1zM1022.8,163.8h1v1h-1zM1036.6,163.8h1v1h-1zM1050.4,163.8h1v1h-1zM1064.1,163.8h1v1h-1zM1077.9,163.8h1v1h-1zM1091.6,163.8h1v1h-1zM1105.4,163.8h1v1h-1zM1119.2,163.8h1v1h-1zM1132.9,163.8h1v1h-1zM1146.7,163.8h1v1h-1zM1160.4,163.8h1v1h-1zM1174.2,163.8h1v1h-1zM1188.0,163.8h1v1h-1zM1201.7,163.8h1v1h-1zM1215.5,163.8h1v1h-1zM1229.2,163.8h1v1h-1zM1243.0,163.8h1v1h-1zM1256.8,163.8h1v1h-1zM1270.5,163.8h1v1h-1zM1284.3,163.8h1v1h-1zM1298.0,163.8h1v1h-1zM1311.8,163.8h1v1h-1zM1325.6,163.8h1v1h-1zM1339.3,163.8h1v1h-1zM1353.1,163.8h1v1h-1zM1366.8,163.8h1v1h-1zM1380.6,163.8h1v1h-1zM1394.4,163.8h1v1h-1zM1408.1,163.8h1v1h-1zM1421.9,163.8h1v1h-1zM747.6,200.6h1v1h-1zM761.4,200.6h1v1h-1zM775.2,200.6h1v1h-1zM788.9,200.6h1v1h-1zM802.7,200.6h1v1h-1zM816.4,200.6h1v1h-1zM830.2,200.6h1v1h-1zM844.0,200.6h1v1h-1zM857.7,200.6h1v1h-1zM871.5,200.6h1v1h-1zM885.2,200.6h1v1h-1zM899.0,200.6h1v1h-1zM912.8,200.6h1v1h-1zM926.5,200.6h1v1h-1zM940.3,200.6h1v1h-1zM954.0,200.6h1v1h-1zM967.8,200.6h1v1h-1zM981.6,200.6h1v1h-1zM995.3,200.6h1v1h-1zM1009.1,200.6h1v1h-1zM1022.8,200.6h1v1h-1zM1036.6,200.6h1v1h-1zM1050.4,200.6h1v1h-1zM1064.1,200.6h1v1h-1zM1077.9,200.6h1v1h-1zM1091.6,200.6h1v1h-1zM1105.4,200.6h1v1h-1zM1119.2,200.6h1v1h-1zM1132.9,200.6h1v1h-1zM1146.7,200.6h1v1h-1zM1160.4,200.6h1v1h-1zM1174.2,200.6h1v1h-1zM1188.0,200.6h1v1h-1zM1201.7,200.6h1v1h-1zM1215.5,200.6h1v1h-1zM1229.2,200.6h1v1h-1zM1243.0,200.6h1v1h-1zM1256.8,200.6h1v1h-1zM1270.5,200.6h1v1h-1zM1284.3,200.6h1v1h-1zM1298.0,200.6h1v1h-1zM1311.8,200.6h1v1h-1zM1325.6,200.6h1v1h-1zM1339.3,200.6h1v1h-1zM1353.1,200.6h1v1h-1zM1366.8,200.6h1v1h-1zM1380.6,200.6h1v1h-1zM1394.4,200.6h1v1h-1zM1408.1,200.6h1v1h-1zM1421.9,200.6h1v1h-1zM747.6,237.3h1v1h-1zM761.4,237.3h1v1h-1zM775.2,237.3h1v1h-1zM788.9,237.3h1v1h-1zM802.7,237.3h1v1h-1zM816.4,237.3h1v1h-1zM830.2,237.3h1v1h-1zM844.0,237.3h1v1h-1zM857.7,237.3h1v1h-1zM871.5,237.3h1v1h-1zM885.2,237.3h1v1h-1zM899.0,237.3h1v1h-1zM912.8,237.3h1v1h-1zM926.5,237.3h1v1h-1zM940.3,237.3h1v1h-1zM954.0,237.3h1v1h-1zM967.8,237.3h1v1h-1zM981.6,237.3h1v1h-1zM995.3,237.3h1v1h-1zM1009.1,237.3h1v1h-1zM1022.8,237.3h1v1h-1zM1036.6,237.3h1v1h-1zM1050.4,237.3h1v1h-1zM1064.1,237.3h1v1h-1zM1077.9,237.3h1v1h-1zM1091.6,237.3h1v1h-1zM1105.4,237.3h1v1h-1zM1119.2,237.3h1v1h-1zM1132.9,237.3h1v1h-1zM1146.7,237.3h1v1h-1zM1160.4,237.3h1v1h-1zM1174.2,237.3h1v1h-1zM1188.0,237.3h1v1h-1zM1201.7,237.3h1v1h-1zM1215.5,237.3h1v1h-1zM1229.2,237.3h1v1h-1zM1243.0,237.3h1v1h-1zM1256.8,237.3h1v1h-1zM1270.5,237.3h1v1h-1zM1284.3,237.3h1v1h-1zM1298.0,237.3h1v1h-1zM1311.8,237.3h1v1h-1zM1325.6,237.3h1v1h-1zM1339.3,237.3h1v1h-1zM1353.1,237.3h1v1h-1zM1366.8,237.3h1v1h-1zM1380.6,237.3h1v1h-1zM1394.4,237.3h1v1h-1zM1408.1,237.3h1v1h-1zM1421.9,237.3h1v1h-1zM747.6,274.1h1v1h-1zM761.4,274.1h1v1h-1zM775.2,274.1h1v1h-1zM788.9,274.1h1v1h-1zM802.7,274.1h1v1h-1zM816.4,274.1h1v1h-1zM830.2,274.1h1v1h-1zM844.0,274.1h1v1h-1zM857.7,274.1h1v1h-1zM871.5,274.1h1v1h-1zM885.2,274.1h1v1h-1zM899.0,274.1h1v1h-1zM912.8,274.1h1v1h-1zM926.5,274.1h1v1h-1zM940.3,274.1h1v1h-1zM954.0,274.1h1v1h-1zM967.8,274.1h1v1h-1zM981.6,274.1h1v1h-1zM995.3,274.1h1v1h-1zM1009.1,274.1h1v1h-1zM1022.8,274.1h1v1h-1zM1036.6,274.1h1v1h-1zM1050.4,274.1h1v1h-1zM1064.1,274.1h1v1h-1zM1077.9,274.1h1v1h-1zM1091.6,274.1h1v1h-1zM1105.4,274.1h1v1h-1zM1119.2,274.1h1v1h-1zM1132.9,274.1h1v1h-1zM1146.7,274.1h1v1h-1zM1160.4,274.1h1v1h-1zM1174.2,274.1h1v1h-1zM1188.0,274.1h1v1h-1zM1201.7,274.1h1v1h-1zM1215.5,274.1h1v1h-1zM1229.2,274.1h1v1h-1zM1243.0,274.1h1v1h-1zM1256.8,274.1h1v1h-1zM1270.5,274.1h1v1h-1zM1284.3,274.1h1v1h-1zM1298.0,274.1h1v1h-1zM1311.8,274.1h1v1h-1zM1325.6,274.1h1v1h-1zM1339.3,274.1h1v1h-1zM1353.1,274.1h1v1h-1zM1366.8,274.1h1v1h-1zM1380.6,274.1h1v1h-1zM1394.4,274.1h1v1h-1zM1408.1,274.1h1v1h-1zM1421.9,274.1h1v1h-1zM747.6,310.9h1v1h-1zM761.4,310.9h1v1h-1zM775.2,310.9h1v1h-1zM788.9,310.9h1v1h-1zM802.7,310.9h1v1h-1zM816.4,310.9h1v1h-1zM830.2,310.9h1v1h-1zM844.0,310.9h1v1h-1zM857.7,310.9h1v1h-1zM871.5,310.9h1v1h-1zM885.2,310.9h1v1h-1zM899.0,310.9h1v1h-1zM912.8,310.9h1v1h-1zM926.5,310.9h1v1h-1zM940.3,310.9h1v1h-1zM954.0,310.9h1v1h-1zM967.8,310.9h1v1h-1zM981.6,310.9h1v1h-1zM995.3,310.9h1v1h-1zM1009.1,310.9h1v1h-1zM1022.8,310.9h1v1h-1zM1036.6,310.9h1v1h-1zM1050.4,310.9h1v1h-1zM1064.1,310.9h1v1h-1zM1077.9,310.9h1v1h-1zM1091.6,310.9h1v1h-1zM1105.4,310.9h1v1h-1zM1119.2,310.9h1v1h-1zM1132.9,310.9h1v1h-1zM1146.7,310.9h1v1h-1zM1160.4,310.9h1v1h-1zM1174.2,310.9h1v1h-1zM1188.0,310.9h1v1h-1zM1201.7,310.9h1v1h-1zM1215.5,310.9h1v1h-1zM1229.2,310.9h1v1h-1zM1243.0,310.9h1v1h-1zM1256.8,310.9h1v1h-1zM1270.5,310.9h1v1h-1zM1284.3,310.9h1v1h-1zM1298.0,310.9h1v1h-1zM1311.8,310.9h1v1h-1zM1325.6,310.9h1v1h-1zM1339.3,310.9h1v1h-1zM1353.1,310.9h1v1h-1zM1366.8,310.9h1v1h-1zM1380.6,310.9h1v1h-1zM1394.4,310.9h1v1h-1zM1408.1,310.9h1v1h-1zM1421.9,310.9h1v1h-1zM747.6,347.6h1v1h-1zM761.4,347.6h1v1h-1zM775.2,347.6h1v1h-1zM788.9,347.6h1v1h-1zM802.7,347.6h1v1h-1zM816.4,347.6h1v1h-1zM830.2,347.6h1v1h-1zM844.0,347.6h1v1h-1zM857.7,347.6h1v1h-1zM871.5,347.6h1v1h-1zM885.2,347.6h1v1h-1zM899.0,347.6h1v1h-1zM912.8,347.6h1v1h-1zM926.5,347.6h1v1h-1zM940.3,347.6h1v1h-1zM954.0,347.6h1v1h-1zM967.8,347.6h1v1h-1zM981.6,347.6h1v1h-1zM995.3,347.6h1v1h-1zM1009.1,347.6h1v1h-1zM1022.8,347.6h1v1h-1zM1036.6,347.6h1v1h-1zM1050.4,347.6h1v1h-1zM1064.1,347.6h1v1h-1zM1077.9,347.6h1v1h-1zM1091.6,347.6h1v1h-1zM1105.4,347.6h1v1h-1zM1119.2,347.6h1v1h-1zM1132.9,347.6h1v1h-1zM1146.7,347.6h1v1h-1zM1160.4,347.6h1v1h-1zM1174.2,347.6h1v1h-1zM1188.0,347.6h1v1h-1zM1201.7,347.6h1v1h-1zM1215.5,347.6h1v1h-1zM1229.2,347.6h1v1h-1zM1243.0,347.6h1v1h-1zM1256.8,347.6h1v1h-1zM1270.5,347.6h1v1h-1zM1284.3,347.6h1v1h-1zM1298.0,347.6h1v1h-1zM1311.8,347.6h1v1h-1zM1325.6,347.6h1v1h-1zM1339.3,347.6h1v1h-1zM1353.1,347.6h1v1h-1zM1366.8,347.6h1v1h-1zM1380.6,347.6h1v1h-1zM1394.4,347.6h1v1h-1zM1408.1,347.6h1v1h-1zM1421.9,347.6h1v1h-1zM747.6,384.4h1v1h-1zM761.4,384.4h1v1h-1zM775.2,384.4h1v1h-1zM788.9,384.4h1v1h-1zM802.7,384.4h1v1h-1zM816.4,384.4h1v1h-1zM830.2,384.4h1v1h-1zM844.0,384.4h1v1h-1zM857.7,384.4h1v1h-1zM871.5,384.4h1v1h-1zM885.2,384.4h1v1h-1zM899.0,384.4h1v1h-1zM912.8,384.4h1v1h-1zM926.5,384.4h1v1h-1zM940.3,384.4h1v1h-1zM954.0,384.4h1v1h-1zM967.8,384.4h1v1h-1zM981.6,384.4h1v1h-1zM995.3,384.4h1v1h-1zM1009.1,384.4h1v1h-1zM1022.8,384.4h1v1h-1zM1036.6,384.4h1v1h-1zM1050.4,384.4h1v1h-1zM1064.1,384.4h1v1h-1zM1077.9,384.4h1v1h-1zM1091.6,384.4h1v1h-1zM1105.4,384.4h1v1h-1zM1119.2,384.4h1v1h-1zM1132.9,384.4h1v1h-1zM1146.7,384.4h1v1h-1zM1160.4,384.4h1v1h-1zM1174.2,384.4h1v1h-1zM1188.0,384.4h1v1h-1zM1201.7,384.4h1v1h-1zM1215.5,384.4h1v1h-1zM1229.2,384.4h1v1h-1zM1243.0,384.4h1v1h-1zM1256.8,384.4h1v1h-1zM1270.5,384.4h1v1h-1zM1284.3,384.4h1v1h-1zM1298.0,384.4h1v1h-1zM1311.8,384.4h1v1h-1zM1325.6,384.4h1v1h-1zM1339.3,384.4h1v1h-1zM1353.1,384.4h1v1h-1zM1366.8,384.4h1v1h-1zM1380.6,384.4h1v1h-1zM1394.4,384.4h1v1h-1zM1408.1,384.4h1v1h-1zM1421.9,384.4h1v1h-1z" fill="#3a3a3a"/><line x1="899.3" y1="38" x2="899.3" y2="392" stroke="#a0a0a0" stroke-width="1" stroke-dasharray="1.8,2.1"/><line x1="899" y1="347.3" x2="1424" y2="347.3" stroke="#a0a0a0" stroke-width="1" stroke-dasharray="2,2.2"/><polyline points="738.0,345.7 738.4,346.9 739.0,349.6 739.6,347.4 740.0,343.3 740.5,347.5 741.3,344.6 741.7,345.3 742.2,346.6 743.0,346.8 743.6,345.1 744.0,343.8 744.5,345.4 745.2,344.5 745.7,346.8 746.3,343.6 747.0,345.9 747.5,344.7 748.2,348.2 748.9,347.7 749.5,347.1 750.1,345.1 750.7,348.2 751.4,341.1 752.0,343.0 752.6,341.9 753.2,347.9 753.7,346.6 754.4,347.0 755.1,347.0 755.7,342.8 756.4,345.1 757.0,343.9 757.5,348.8 758.0,346.3 758.5,349.7 759.1,344.6 759.7,347.7 760.4,345.9 761.1,345.6 761.8,344.8 762.4,348.1 762.9,346.4 763.3,347.9 763.8,348.5 764.5,347.0 765.0,346.1 765.5,347.6 766.2,344.2 766.7,346.5 767.2,347.0 768.0,345.2 768.4,345.7 769.2,346.0 769.9,346.0 770.6,347.7 771.3,345.5 772.1,347.1 772.8,347.2 773.4,343.6 773.8,347.4 774.5,346.3 775.1,350.6 775.6,344.2 776.1,346.5 776.9,347.2 777.4,344.4 778.1,343.7 778.8,346.1 779.5,344.2 780.2,347.7 781.0,345.8 781.5,346.8 782.2,346.8 782.9,348.5 783.5,345.8 783.9,348.5 784.7,345.7 785.4,346.6 785.9,345.1 786.6,346.0 787.3,347.8 787.9,343.0 788.7,344.3 789.3,345.8 789.8,346.0 790.5,347.0 791.1,347.8 791.7,343.4 792.3,345.1 792.8,346.4 793.5,344.1 794.1,344.6 794.8,344.8 795.4,342.2 796.1,346.6 796.6,342.4 797.1,344.7 797.7,347.2 798.3,346.6 799.1,347.6 799.6,348.3 800.3,346.9 800.9,350.1 801.6,347.0 802.2,347.6 802.7,346.0 803.3,345.5 803.8,343.4 804.6,344.7 805.4,348.1 806.1,346.9 806.6,342.9 807.1,347.8 807.8,343.8 808.3,345.0 808.8,349.6 809.5,347.8 810.3,349.1 810.8,347.4 811.6,346.0 812.1,347.0 812.5,347.2 813.1,346.4 813.6,345.1 814.0,346.1 814.5,345.9 815.0,344.0 815.5,346.8 816.2,344.5 816.8,344.3 817.5,341.7 818.2,343.7 818.7,347.0 819.3,346.1 820.1,347.1 820.7,345.9 821.3,347.3 821.9,345.7 822.5,350.3 823.3,345.0 823.8,347.5 824.4,347.2 825.0,348.0 825.5,346.4 826.0,346.2 826.6,346.1 827.4,343.7 827.9,347.0 828.6,345.9 829.3,347.9 830.0,344.6 830.6,343.0 831.3,346.0 832.1,345.1 832.5,343.8 833.0,348.6 833.7,348.0 834.4,346.0 835.0,346.1 835.7,345.8 836.2,345.6 836.7,346.0 837.5,345.0 838.0,343.6 838.7,346.4 839.1,346.9 839.6,347.1 840.1,347.3 840.7,346.6 841.2,344.3 841.7,345.9 842.2,351.1 842.8,345.6 843.6,344.9 844.3,346.5 844.9,347.4 845.4,347.7 846.0,348.1 846.8,344.4 847.2,348.0 847.7,346.1 848.3,343.7 848.9,349.0 849.4,348.4 849.9,344.9 850.5,348.3 851.1,346.1 851.5,348.6 852.3,348.0 852.8,345.0 853.5,346.0 854.3,343.6 854.9,343.4 855.3,345.9 856.0,344.3 856.4,346.9 856.9,345.7 857.6,347.4 858.2,345.9 858.7,346.6 859.5,347.0 860.0,350.7 860.4,343.0 860.9,345.7 861.4,346.7 862.1,346.1 862.8,344.4 863.3,347.3 863.8,346.6 864.4,346.9 864.9,345.2 865.5,349.2 865.9,344.4 866.6,347.6 867.0,345.0 867.8,347.6 868.3,343.2 868.8,343.6 869.4,345.7 870.1,342.3 870.8,346.7 871.6,345.2 872.1,345.0 872.8,346.6 873.4,346.5 873.9,345.9 874.5,346.0 875.1,347.5 875.6,344.8 876.3,346.0 877.0,346.4 877.5,344.2 877.9,342.8 878.5,345.6 879.2,345.1 879.7,347.5 880.2,345.8 880.9,345.0 881.4,350.0 881.9,344.1 882.5,342.6 883.3,346.7 883.8,346.5 884.6,345.5 885.1,341.1 885.9,346.1 886.4,345.7 887.0,346.2 887.5,346.2 888.0,347.2 888.7,345.8 889.3,347.9 890.0,346.7 890.6,346.4 891.3,345.9 891.7,346.7 892.2,346.2 893.0,345.4 893.6,347.2 894.3,345.1 895.0,347.3 895.6,346.4 896.2,346.0 897.0,345.1 897.6,346.9" fill="none" stroke="#f2e21a" stroke-width="1.3" stroke-linejoin="miter" stroke-miterlimit="2"/><polyline points="897.6,346.9 897.8,346.0 898.1,300.0 899.3,180.0 900.5,140.0 902.0,112.0 903.5,92.0 906.0,79.0" fill="none" stroke="#f2e21a" stroke-width="1.0" stroke-linejoin="miter" stroke-miterlimit="2"/><polyline points="906.0,79.0 906.5,77.9 907.2,74.6 907.7,76.1 908.2,77.8 908.9,76.3 909.5,76.6 910.3,79.0 910.7,72.8 911.3,75.0 911.9,73.7 912.5,75.0 913.0,72.0 913.5,73.4 914.0,73.9 914.5,76.0 915.1,76.6 915.9,72.8 916.5,73.5 917.0,70.8 917.7,74.0 918.2,73.7 918.9,73.4 919.4,73.6 920.1,71.1 920.6,70.5 921.1,70.8 921.6,71.7 922.1,75.3 922.7,71.0 923.2,70.5 923.8,71.9 924.4,71.6 924.8,72.4 925.4,73.2 926.1,70.6 926.7,73.0 927.5,70.7 928.0,72.7 928.7,68.9 929.5,72.5 929.9,73.1 930.7,71.5 931.3,70.1 931.8,72.5 932.6,72.6 933.4,72.4 933.8,75.0 934.3,69.9 934.8,73.0 935.3,70.2 935.8,69.0 936.3,72.9 936.9,69.9 937.4,71.1 938.1,73.1 938.5,71.8 939.0,69.8 939.5,70.2 940.2,69.4 940.7,73.1 941.4,70.2 942.1,71.4 942.6,70.6 943.1,71.4 943.7,70.9 944.2,71.3 944.9,70.8 945.4,71.3 945.9,74.3 946.6,67.5 947.4,67.7 947.9,71.5 948.6,72.5 949.1,71.8 949.6,71.6 950.4,70.6 950.9,68.9 951.4,71.3 952.1,70.0 952.8,68.5 953.4,70.4 954.1,70.3 954.8,74.9 955.4,74.1 955.9,73.2 956.6,71.2 957.1,71.3 957.6,70.8 958.3,69.5 958.8,69.2 959.2,70.2" fill="none" stroke="#f2e21a" stroke-width="1.3" stroke-linejoin="miter" stroke-miterlimit="2"/><polyline points="959.2,70.2 959.3,72.0 959.6,140.0 962.0,250.0 964.5,300.0 966.3,327.0 968.6,340.0" fill="none" stroke="#f2e21a" stroke-width="1.0" stroke-linejoin="miter" stroke-miterlimit="2"/><polyline points="968.6,340.0 969.0,343.6 969.5,344.4 970.0,344.5 970.6,345.2 971.1,347.1 971.7,347.5 972.2,347.8 972.8,346.9 973.3,340.7 974.0,343.3 974.6,344.2 975.2,344.9 975.8,348.5 976.4,349.8 977.0,345.9 977.4,345.5 978.1,347.0 978.6,343.8 979.3,346.2 980.0,348.1 980.6,344.9 981.2,344.9 981.6,345.6 982.3,343.7 982.8,341.7 983.4,345.3 984.0,342.8 984.5,345.0 985.0,344.6 985.8,344.8 986.3,343.3 987.1,343.0 987.9,342.9 988.6,343.7 989.3,341.6 989.8,345.4 990.5,347.1 991.0,347.9 991.4,349.5 991.9,343.9 992.6,340.4 993.2,342.7 993.9,349.4 994.7,348.4 995.2,342.7 995.6,346.6 996.3,342.2 996.8,345.4 997.3,345.3 997.9,346.1 998.6,345.0 999.1,346.8 999.8,343.9 1000.3,342.1 1001.0,346.0 1001.5,345.3 1002.0,343.7 1002.5,345.5 1003.1,340.0 1003.8,345.6 1004.5,346.7 1005.2,344.5 1005.8,346.0 1006.5,347.5 1007.2,346.3 1007.7,343.4 1008.2,345.8 1008.6,345.2 1009.2,346.1 1010.0,345.0 1010.7,346.7 1011.3,343.9 1012.0,346.1 1012.7,345.7 1013.4,346.4 1013.9,345.8 1014.5,344.0 1015.2,345.4 1015.7,345.6 1016.2,344.3 1016.9,345.8 1017.7,346.2 1018.4,345.8 1018.9,345.6 1019.4,347.1 1019.9,342.3 1020.5,346.6 1021.1,346.3 1021.7,346.6 1022.3,342.2" fill="none" stroke="#f2e21a" stroke-width="1.3" stroke-linejoin="miter" stroke-miterlimit="2"/><polyline points="1022.3,342.2 1022.5,346.0 1023.5,330.0 1026.6,200.0 1028.5,110.0 1030.8,78.0" fill="none" stroke="#f2e21a" stroke-width="1.0" stroke-linejoin="miter" stroke-miterlimit="2"/><polyline points="1030.8,78.0 1031.0,75.1 1031.7,76.1 1032.4,73.1 1033.0,74.2 1033.6,76.5 1034.2,73.4 1034.8,73.0 1035.4,72.0 1036.0,70.1 1036.6,67.7 1037.2,72.6 1037.9,73.5 1038.5,70.8 1039.2,69.1 1039.8,71.0 1040.6,71.7 1041.3,73.3 1042.1,70.9 1042.6,71.9 1043.2,69.2 1043.7,72.3 1044.4,72.8 1045.1,70.6 1045.6,72.9 1046.2,73.0 1046.9,71.8 1047.5,74.9 1048.2,70.0 1048.7,71.4 1049.2,71.9 1049.8,70.3 1050.2,73.5 1050.8,71.2 1051.3,69.4 1051.9,72.1 1052.6,73.7 1053.3,72.1 1054.0,70.9 1054.8,71.0 1055.3,71.8 1056.0,71.7 1056.5,73.3 1057.2,69.8 1057.9,69.7 1058.7,68.5 1059.3,68.9 1060.1,70.7 1060.6,71.3 1061.0,72.0 1061.5,69.5 1062.2,71.4 1062.9,69.4 1063.7,71.6 1064.2,71.8 1064.9,70.9 1065.5,69.8 1066.3,68.2 1066.9,71.5 1067.5,71.0 1068.3,70.1 1069.0,72.4 1069.5,69.6 1070.1,72.1 1070.6,70.1 1071.4,71.2 1072.1,70.6 1072.7,72.3 1073.4,73.4 1074.1,72.3 1074.6,72.1 1075.2,71.2 1075.9,72.9 1076.6,70.1 1077.2,70.8 1077.8,70.3 1078.3,71.4 1079.0,71.6 1079.6,72.3 1080.1,68.9 1080.6,70.6 1081.4,73.8 1082.0,71.9 1082.7,71.4 1083.2,72.6 1084.0,71.3 1084.6,70.6 1085.1,71.5 1085.5,73.4 1086.3,71.3 1087.0,71.4 1087.5,71.4 1088.0,73.6 1088.7,72.0 1089.2,69.6 1089.9,69.6 1090.7,71.1 1091.4,71.0 1091.8,70.3 1092.5,73.4 1093.0,69.9 1093.6,72.6 1094.3,69.8 1094.9,72.8 1095.6,73.6 1096.1,69.6 1096.9,70.4 1097.6,68.6 1098.3,70.2 1099.0,70.5 1099.7,68.7 1100.2,67.7 1100.7,69.5 1101.5,72.9 1102.2,72.3 1102.7,68.5 1103.4,69.9 1103.9,68.3 1104.6,71.9 1105.1,73.5 1105.7,70.2 1106.4,71.4 1107.0,73.4 1107.5,72.6 1108.3,72.5 1108.9,70.0 1109.4,72.1 1110.0,73.2 1110.6,71.5 1111.2,71.6 1111.8,71.4 1112.3,70.4 1112.8,75.5 1113.4,72.1 1113.9,71.5 1114.6,69.7 1115.3,71.2 1115.8,71.6 1116.3,68.5 1117.0,70.2 1117.5,70.0 1118.2,70.4 1118.9,68.9 1119.4,68.4 1119.9,75.6 1120.3,70.2 1120.9,73.8 1121.3,69.4 1122.0,66.4 1122.5,67.9 1123.2,70.7 1123.9,70.1 1124.5,71.2 1124.9,71.9 1125.4,71.1 1125.9,70.8 1126.7,71.8 1127.4,74.5 1128.0,73.9 1128.6,73.1 1129.2,71.9 1129.6,69.7 1130.1,70.8 1130.8,69.4 1131.4,71.8 1131.9,72.1 1132.5,69.9 1133.3,76.2 1134.0,70.7 1134.5,70.3 1135.0,68.3 1135.8,74.5 1136.3,71.6 1136.8,70.9 1137.3,71.7 1137.7,70.0 1138.3,71.8 1138.8,72.6 1139.3,72.3 1139.8,73.4 1140.2,69.9 1140.7,70.1 1141.4,71.9 1141.8,69.4 1142.4,71.1 1142.9,70.7 1143.7,70.9 1144.3,71.2 1144.8,72.3 1145.2,73.7 1145.9,72.9 1146.5,71.3 1147.2,72.4" fill="none" stroke="#f2e21a" stroke-width="1.3" stroke-linejoin="miter" stroke-miterlimit="2"/><polyline points="1147.2,72.4 1147.5,72.0 1148.5,120.0 1150.3,180.0 1153.0,280.0 1155.8,335.4" fill="none" stroke="#f2e21a" stroke-width="1.0" stroke-linejoin="miter" stroke-miterlimit="2"/><polyline points="1155.8,335.4 1156.0,341.1 1156.7,348.0 1157.3,345.9 1157.9,344.1 1158.4,344.4 1158.9,344.5 1159.3,348.0 1159.8,347.0 1160.4,344.8 1160.9,348.4 1161.3,342.3 1161.9,344.3 1162.4,345.4 1163.1,346.0 1163.6,346.4 1164.4,343.0 1165.0,345.8 1165.7,344.8 1166.3,342.8 1167.0,345.9 1167.8,339.5 1168.4,348.7 1169.0,343.4 1169.5,343.8 1170.1,344.2 1170.6,347.7 1171.2,343.9 1172.0,344.9 1172.5,344.2 1173.0,340.4 1173.5,343.4 1174.1,346.0 1174.7,344.0 1175.4,346.7 1176.0,343.9 1176.4,345.2 1177.0,345.2 1177.5,346.5 1178.1,345.7 1178.8,345.4 1179.4,347.3 1180.0,344.0 1180.6,345.8 1181.2,346.2 1181.7,344.6 1182.3,343.3 1183.0,349.5 1183.5,347.1 1184.0,343.0 1184.7,345.5 1185.4,345.3 1186.0,342.8 1186.7,346.7 1187.3,344.3 1187.9,341.4 1188.6,345.3 1189.0,344.0 1189.6,339.7 1190.2,344.6 1190.9,343.1 1191.5,343.4 1192.0,342.7 1192.6,346.0 1193.3,342.5 1193.8,344.5 1194.4,343.8 1195.0,344.1 1195.7,345.7 1196.4,343.9 1196.9,342.5 1197.6,343.6 1198.4,342.3 1198.9,344.3 1199.6,341.8 1200.2,348.2 1200.7,342.5 1201.5,345.9 1202.1,342.1 1202.6,345.5 1203.3,345.3 1204.0,345.9 1204.5,346.8 1205.3,342.7 1205.8,345.4 1206.4,345.8 1206.9,342.8 1207.7,342.6 1208.1,341.7 1208.8,347.8 1209.3,345.9" fill="none" stroke="#f2e21a" stroke-width="1.3" stroke-linejoin="miter" stroke-miterlimit="2"/><polyline points="1209.3,345.9 1209.7,346.0 1211.0,300.0 1213.5,200.0 1216.0,120.0 1219.0,78.0" fill="none" stroke="#f2e21a" stroke-width="1.0" stroke-linejoin="miter" stroke-miterlimit="2"/><polyline points="1219.0,78.0 1219.0,74.6 1219.6,75.6 1220.4,77.4 1221.0,75.6 1221.4,75.3 1221.9,71.7 1222.6,73.2 1223.0,73.8 1223.6,72.1 1224.1,75.5 1224.6,74.5 1225.2,75.2 1226.0,72.9 1226.6,71.4 1227.3,71.6 1228.1,71.7 1228.9,70.1 1229.6,71.3 1230.1,72.6 1230.9,68.7 1231.3,71.5 1231.8,72.4 1232.3,71.0 1232.8,70.8 1233.6,71.5 1234.1,71.6 1234.5,72.3 1235.0,72.5 1235.6,73.1 1236.0,68.6 1236.5,72.2 1237.2,68.6 1237.9,73.7 1238.4,70.5 1239.0,71.4 1239.6,70.5 1240.1,72.0 1240.6,69.4 1241.3,71.1 1241.9,70.1 1242.4,70.7 1243.1,70.3 1243.7,73.1 1244.3,71.0 1244.8,71.7 1245.5,70.9 1246.2,72.6 1246.9,72.7 1247.6,72.1 1248.1,69.4 1248.6,72.3 1249.2,70.6 1249.9,70.5 1250.6,71.6 1251.1,71.3 1251.7,72.4 1252.1,71.5 1252.8,71.0 1253.4,70.1 1253.9,72.5 1254.3,69.0 1254.9,72.2 1255.6,71.5 1256.4,71.2 1256.9,70.6 1257.7,71.1 1258.2,71.8 1258.9,71.0 1259.5,66.2 1260.2,69.6 1260.6,72.0 1261.1,70.4 1261.7,68.7 1262.3,69.2 1262.9,70.9 1263.4,70.9 1264.0,71.9 1264.5,69.6 1265.1,71.0 1265.8,72.4 1266.5,72.6 1267.2,72.2 1267.8,73.1 1268.5,72.1 1269.0,72.7 1269.5,71.9 1270.0,73.3 1270.6,70.6 1271.0,71.9 1271.7,73.2" fill="none" stroke="#f2e21a" stroke-width="1.3" stroke-linejoin="miter" stroke-miterlimit="2"/><polyline points="1271.7,73.2 1272.4,72.0 1274.0,120.0 1276.0,200.0 1278.5,300.0 1280.5,338.0" fill="none" stroke="#f2e21a" stroke-width="1.0" stroke-linejoin="miter" stroke-miterlimit="2"/><polyline points="1280.5,338.0 1281.0,347.3 1281.6,345.0 1282.0,346.4 1282.7,343.3 1283.2,343.2 1283.7,348.8 1284.2,346.5 1284.8,348.1 1285.5,342.9 1286.2,345.5 1286.8,346.9 1287.4,343.9 1287.8,348.3 1288.5,347.1 1289.2,343.7 1289.8,346.8 1290.3,347.2 1290.7,341.9 1291.2,347.5 1291.7,346.0 1292.4,345.9 1293.0,345.5 1293.5,348.4 1294.1,344.4 1294.6,343.3 1295.2,344.6 1295.6,345.4 1296.2,349.6 1297.0,345.4 1297.6,346.2 1298.3,345.5 1298.9,347.8 1299.4,345.4 1300.2,347.1 1300.7,346.2 1301.4,344.5 1302.0,347.6 1302.6,346.8 1303.2,346.7 1303.9,346.0 1304.4,346.7 1305.0,346.3 1305.6,348.1 1306.1,345.5 1306.8,346.4 1307.5,346.0 1308.2,345.2 1308.9,345.2 1309.5,346.6 1310.0,346.1 1310.6,344.9 1311.2,346.3 1311.8,347.4 1312.4,347.5 1313.1,344.5 1313.8,344.5 1314.5,348.4 1315.1,345.7 1315.5,342.0 1316.0,343.2 1316.7,345.1 1317.3,346.6 1317.9,347.7 1318.3,348.3 1318.9,347.9 1319.6,345.3 1320.2,346.6 1320.9,346.3 1321.4,345.9 1322.1,346.1 1322.8,345.6 1323.4,345.0 1324.0,346.1 1324.6,347.3 1325.3,346.7 1325.8,346.8 1326.4,347.4 1327.0,348.2 1327.4,346.1 1328.2,346.9 1328.7,346.3 1329.3,345.8 1330.0,348.1 1330.5,343.4 1331.2,344.9 1331.8,345.1 1332.6,347.0 1333.2,345.1 1333.8,348.7 1334.4,343.0 1334.9,345.5 1335.7,344.4 1336.2,346.2 1336.7,349.3 1337.2,346.2 1337.8,346.3 1338.3,346.5 1338.9,347.4 1339.6,345.4 1340.0,341.7 1340.7,343.6 1341.5,347.7 1342.0,346.8 1342.4,346.7 1342.9,347.1 1343.4,343.4 1343.9,344.0 1344.7,345.5 1345.4,345.6 1345.9,346.8 1346.5,347.9 1347.0,344.7 1347.6,348.4 1348.1,349.0 1348.8,346.6 1349.4,345.0 1349.8,345.3 1350.4,346.6 1351.1,346.0 1351.5,346.5 1352.0,346.8 1352.6,343.9 1353.2,345.5 1353.8,345.9 1354.5,344.7 1355.0,346.6 1355.5,341.5 1356.3,346.2 1356.9,346.2 1357.5,347.2 1357.9,345.9 1358.4,347.8 1358.9,346.7 1359.4,346.6 1360.2,346.8 1360.6,346.2 1361.2,344.8 1361.8,346.6 1362.5,344.3 1363.2,348.2 1363.9,347.8 1364.5,342.9 1365.2,348.0 1365.7,345.9 1366.2,347.8 1366.8,344.4 1367.5,351.0 1368.2,346.9 1368.9,345.0 1369.5,342.5 1370.1,346.3 1370.7,343.0 1371.4,344.4 1372.1,346.7 1372.9,345.2 1373.4,351.0 1374.1,348.9 1374.8,346.8 1375.2,346.6 1376.0,345.3 1376.4,342.7 1377.1,345.8 1377.6,345.6 1378.1,351.0 1378.8,346.6 1379.4,347.2 1380.1,347.3 1380.8,345.2 1381.4,346.0 1381.9,346.9 1382.6,350.2 1383.1,345.9 1383.7,346.6 1384.3,345.8 1385.0,346.2 1385.6,344.3 1386.3,341.6 1386.8,342.1 1387.4,348.2 1387.8,346.2 1388.6,346.0 1389.2,345.1 1389.7,346.9 1390.4,346.4 1390.9,345.7 1391.5,342.6 1392.2,350.0 1392.8,341.5 1393.5,343.1 1394.0,345.6 1394.7,344.4 1395.2,344.6 1395.8,344.5 1396.6,343.4 1397.2,346.4 1397.7,347.8 1398.3,345.1 1398.8,347.4 1399.4,348.7 1400.2,346.3 1400.9,345.6 1401.3,346.7 1401.9,347.0 1402.5,345.3 1403.3,346.2 1403.9,343.1 1404.3,346.4 1404.9,344.8 1405.4,345.8 1405.9,347.2 1406.3,348.1 1406.9,345.4 1407.3,347.1 1408.0,346.5 1408.7,347.7 1409.1,344.5 1409.7,346.6 1410.3,346.6 1410.9,344.6 1411.4,348.6 1412.1,345.5 1412.5,346.1 1413.1,344.4 1413.8,348.2 1414.4,346.4 1415.0,342.6 1415.6,346.6 1416.3,344.7 1416.7,343.6 1417.3,346.3 1417.8,343.2 1418.6,346.6 1419.2,346.8 1419.8,345.1 1420.5,344.2 1421.1,349.1 1421.6,346.0 1422.2,351.0 1422.7,346.2 1423.2,347.3 1423.8,342.9" fill="none" stroke="#f2e21a" stroke-width="1.3" stroke-linejoin="miter" stroke-miterlimit="2"/><path d="M895,25 L903,25 L899,28.5 Z" fill="#e8801e"/><path d="M895.3,28.8 h7.4 v7.2 l-3.7,2.8 l-3.7,-2.8 z" fill="#000" stroke="#e8801e" stroke-width="1.1"/><text x="899" y="35" text-anchor="middle" class="ui" font-size="6.5" font-weight="bold" fill="#e8801e">T</text><path d="M739,204 h9 l4.2,4.8 l-4.2,4.8 h-9 z" fill="#f3e32a"/><text x="742" y="211.3" class="ui" font-size="6.5" font-weight="bold" fill="#222">C1</text><text x="1423" y="55.9" text-anchor="end" class="ui" font-size="6" fill="#c9c020">3.52 V</text><text x="1423" y="92.6" text-anchor="end" class="ui" font-size="6" fill="#c9c020">3.08 V</text><text x="1423" y="129.4" text-anchor="end" class="ui" font-size="6" fill="#c9c020">2.64 V</text><text x="1423" y="166.2" text-anchor="end" class="ui" font-size="6" fill="#c9c020">2.20 V</text><text x="1423" y="202.9" text-anchor="end" class="ui" font-size="6" fill="#c9c020">1.76 V</text><text x="1423" y="239.7" text-anchor="end" class="ui" font-size="6" fill="#c9c020">1.32 V</text><text x="1423" y="276.4" text-anchor="end" class="ui" font-size="6" fill="#c9c020">880 mV</text><text x="1423" y="313.2" text-anchor="end" class="ui" font-size="6" fill="#c9c020">440 mV</text><text x="1423" y="386.7" text-anchor="end" class="ui" font-size="6" fill="#c9c020">-440 mV</text><text x="761.4" y="390.5" text-anchor="middle" class="ui" font-size="6" fill="#b0b0b0">-220 ns</text><text x="830.2" y="390.5" text-anchor="middle" class="ui" font-size="6" fill="#b0b0b0">-110 ns</text><text x="899.0" y="390.5" text-anchor="middle" class="ui" font-size="6" fill="#b0b0b0">0 s</text><text x="967.8" y="390.5" text-anchor="middle" class="ui" font-size="6" fill="#b0b0b0">110 ns</text><text x="1036.6" y="390.5" text-anchor="middle" class="ui" font-size="6" fill="#b0b0b0">220 ns</text><text x="1105.4" y="390.5" text-anchor="middle" class="ui" font-size="6" fill="#b0b0b0">330 ns</text><text x="1174.2" y="390.5" text-anchor="middle" class="ui" font-size="6" fill="#b0b0b0">440 ns</text><text x="1243.0" y="390.5" text-anchor="middle" class="ui" font-size="6" fill="#b0b0b0">550 ns</text><text x="1311.8" y="390.5" text-anchor="middle" class="ui" font-size="6" fill="#b0b0b0">660 ns</text><text x="1380.6" y="390.5" text-anchor="middle" class="ui" font-size="6" fill="#b0b0b0">770 ns</text><path d="M1409,28 L1424.5,28 L1424.5,42 Z" fill="#7a7a7a"/><circle cx="1420" cy="31.5" r="1.8" fill="none" stroke="#ddd" stroke-width="0.8"/><line x1="1418.7" y1="32.8" x2="1416.5" y2="35" stroke="#ddd" stroke-width="0.9"/><path d="M1416.2,208.8 L1421,203.8 L1421,213.8 Z" fill="#f3e32a"/><rect x="1420" y="207.8" width="4.5" height="2" fill="#f3e32a"/><rect x="1218.3" y="91" width="190.0" height="243.3" fill="#7f7f7f"/><rect x="1218.3" y="91" width="190.0" height="17.4" fill="#5b5b5b"/><rect x="1218.3" y="108.4" width="190.0" height="16.2" fill="#bababa"/><rect x="1218.3" y="124.6" width="190.0" height="1.9" fill="#8c8c8c"/><rect x="1218.3" y="126.5" width="190.0" height="15.5" fill="#b6b6b6"/><rect x="1218.3" y="141.6" width="190.0" height="1" fill="#6e6e6e"/><text x="1222.6" y="102.5" class="ui" font-size="6.5" fill="#e8e8e8">采集</text><circle cx="1395.6" cy="100" r="5" fill="none" stroke="#e0e0e0" stroke-width="1"/><text x="1395.6" y="103" text-anchor="middle" class="ui" font-size="8" fill="#e0e0e0">?</text><text x="1222.6" y="119" class="ui" font-size="6.5" fill="#222">设置</text><path d="M1397.5,113.5 L1400.5,116.5 L1397.5,119.5" fill="none" stroke="#333" stroke-width="1.3"/><text x="1222.6" y="136.5" class="ui" font-size="6" fill="#333">FAST FRAME</text><text x="1222.6" y="152" class="ui" font-size="6.3" fill="#222">Fast Frame</text><rect x="1224.4" y="155.6" width="27" height="13.5" rx="2" fill="#9a9a9a" stroke="#6a6a6a" stroke-width="0.6"/><rect x="1224.9" y="156.1" width="7.5" height="12.5" rx="2" fill="#cfcfcf"/><text x="1242.4" y="164.9" text-anchor="middle" class="ui" font-size="6.5" fill="#222">关</text><text x="1222.6" y="179.8" class="ui" font-size="6.3" fill="#222">帧数</text><rect x="1223.8" y="181.9" width="57.6" height="16.4" rx="2" fill="#b9b9b9" stroke="#6fb6e6" stroke-width="1.5"/><circle cx="1230.5" cy="190" r="3.6" fill="#2f78c8" stroke="#cfe4f5" stroke-width="0.6"/><text x="1230.5" y="192.3" text-anchor="middle" class="ui" font-size="5.5" font-weight="bold" fill="#fff">A</text><rect x="1267" y="185.3" width="12.5" height="8" fill="#3d7fd0"/><text x="1268" y="192" class="ui" font-size="6.3" fill="#fff">50 k</text><text x="1290" y="180.5" class="ui" font-size="6.2" fill="#1e1e1e">最大值 =72.727 k 使用当前设置</text><text x="1290" y="187.5" class="ui" font-size="6.2" fill="#1e1e1e">帧时长:1.1 μs</text><text x="1290" y="194.5" class="ui" font-size="6.2" fill="#1e1e1e">帧分辨率:160 ps/pt(6.25 GS/s)</text><text x="1290" y="201.5" class="ui" font-size="6.2" fill="#1e1e1e">帧长度:6.875 kpts</text><text x="1269.8" y="218.5" text-anchor="middle" class="ui" font-size="6.2" font-weight="bold" fill="#1a1a1a">Frame 1</text><text x="1309.2" y="218.5" text-anchor="middle" class="ui" font-size="6.2" font-weight="bold" fill="#1a1a1a">Frame 2</text><text x="1348.3" y="218.5" text-anchor="middle" class="ui" font-size="6.2" font-weight="bold" fill="#1a1a1a">Frame N</text><rect x="1251.4" y="222" width="36.2" height="56.5" fill="none" stroke="#c8c8c8" stroke-width="0.7" stroke-dasharray="1,1.3"/><polyline points="1252.4,273.5 1252.4,273.9 1253.7,273.8 1255.0,273.9 1256.3,272.9 1257.6,272.8 1258.9,272.6 1260.2,273.4 1261.5,273.1 1261.7,273.3 1261.7,237.3 1261.7,237.1 1263.0,237.2 1264.3,237.3 1265.6,237.0 1266.9,237.7 1268.2,236.7 1269.5,237.9 1270.8,237.3 1272.1,236.5 1273.4,236.9 1274.7,237.3 1276.0,237.1 1277.3,237.3 1278.5,237.3 1278.5,273.3 1278.5,273.0 1279.8,272.9 1281.1,273.8 1282.4,273.0 1283.7,273.6 1285.0,273.8 1286.3,273.4" fill="none" stroke="#f0dc1e" stroke-width="1.3"/><path d="M1257.2,224.5 h8 v7.5 h-2.5 l-1.5,2 l-1.5,-2 h-2.5 z" fill="#5b5f9a" stroke="#c8c8e0" stroke-width="0.5"/><text x="1261.2" y="230.5" text-anchor="middle" class="ui" font-size="5.5" font-weight="bold" fill="#fff">T</text><rect x="1290.8" y="222" width="36.2" height="56.5" fill="none" stroke="#c8c8c8" stroke-width="0.7" stroke-dasharray="1,1.3"/><polyline points="1291.8,273.5 1291.8,273.2 1293.1,274.0 1294.4,273.2 1295.7,273.9 1297.0,272.6 1298.3,273.2 1299.6,273.5 1300.5,273.3 1300.5,237.3 1300.5,236.5 1301.8,237.8 1303.1,236.5 1304.4,237.4 1305.7,236.7 1307.0,237.9 1308.3,237.3 1309.6,237.7 1310.9,237.2 1312.2,237.5 1313.5,237.5 1314.8,236.9 1316.1,236.7 1317.4,237.7 1317.6,237.3 1317.6,273.3 1317.6,272.7 1318.9,274.0 1320.2,272.8 1321.5,272.7 1322.8,272.7 1324.1,273.8 1325.4,274.0" fill="none" stroke="#f0dc1e" stroke-width="1.3"/><path d="M1296.0,224.5 h8 v7.5 h-2.5 l-1.5,2 l-1.5,-2 h-2.5 z" fill="#5b5f9a" stroke="#c8c8e0" stroke-width="0.5"/><text x="1300.0" y="230.5" text-anchor="middle" class="ui" font-size="5.5" font-weight="bold" fill="#fff">T</text><rect x="1330.2" y="222" width="36.2" height="56.5" fill="none" stroke="#c8c8c8" stroke-width="0.7" stroke-dasharray="1,1.3"/><polyline points="1331.2,273.5 1331.2,273.2 1332.5,273.6 1333.8,272.9 1335.1,273.9 1336.4,273.6 1337.7,272.7 1339.0,272.6 1340.2,273.3 1340.2,237.3 1340.2,237.5 1341.5,236.5 1342.8,237.7 1344.1,236.9 1345.4,236.8 1346.7,237.3 1348.0,236.9 1349.3,237.3 1350.6,236.6 1351.9,237.9 1353.2,236.9 1354.5,237.7 1355.8,236.6 1357.0,237.3 1357.0,273.3 1357.0,273.8 1358.3,274.1 1359.6,273.1 1360.9,272.6 1362.2,273.1 1363.5,273.5 1364.8,272.9" fill="none" stroke="#f0dc1e" stroke-width="1.3"/><path d="M1335.7,224.5 h8 v7.5 h-2.5 l-1.5,2 l-1.5,-2 h-2.5 z" fill="#5b5f9a" stroke="#c8c8e0" stroke-width="0.5"/><text x="1339.7" y="230.5" text-anchor="middle" class="ui" font-size="5.5" font-weight="bold" fill="#fff">T</text><text x="1222.6" y="295" class="ui" font-size="6.3" fill="#222">锁窗帧</text><rect x="1224.4" y="298.5" width="27" height="13.5" rx="2" fill="#9a9a9a" stroke="#6a6a6a" stroke-width="0.6"/><rect x="1224.9" y="299.0" width="7.5" height="12.5" rx="2" fill="#cfcfcf"/><text x="1242.4" y="307.8" text-anchor="middle" class="ui" font-size="6.5" fill="#222">关</text><polyline points="1273,91 1274,140 1276,200 1278.5,290 1280.5,334" fill="none" stroke="#9a9670" stroke-width="0.7" opacity="0.5"/><rect x="1426" y="14" width="65" height="379" fill="#2b2b2b"/><rect x="1431.5" y="14" width="58.5" height="377" fill="#2a2a2a" stroke="#484848" stroke-width="0.8"/><text x="1461" y="13" text-anchor="middle" font-family="Liberation Sans" font-weight="bold" font-size="11.2" fill="#fff" stroke="#fff" stroke-width="0.35" letter-spacing="-0.35">Tektronix</text><path d="M1449.5,12.8 L1452.5,6.5 L1454,6.5 L1451,12.8 Z" fill="#29b8e0"/><text x="1461" y="21.5" text-anchor="middle" class="ui" font-size="6.5" fill="#ddd">添加新...</text><rect x="1434.7" y="25.2" width="25" height="14" rx="2.5" fill="#2a2a2a" stroke="#4e4a46" stroke-width="0.9"/><text x="1447.2" y="34.7" text-anchor="middle" class="ui" font-size="6.3" fill="#d8d8d8">光标</text><rect x="1463" y="25.2" width="25" height="14" rx="2.5" fill="#2a2a2a" stroke="#4e4a46" stroke-width="0.9"/><text x="1475.5" y="34.7" text-anchor="middle" class="ui" font-size="6.3" fill="#d8d8d8">Callout</text><rect x="1434.7" y="43.1" width="25" height="14" rx="2.5" fill="#2a2a2a" stroke="#4e4a46" stroke-width="0.9"/><text x="1447.2" y="52.6" text-anchor="middle" class="ui" font-size="6.3" fill="#d8d8d8">测量</text><rect x="1463" y="43.1" width="25" height="14" rx="2.5" fill="#2a2a2a" stroke="#4e4a46" stroke-width="0.9"/><text x="1475.5" y="52.6" text-anchor="middle" class="ui" font-size="6.3" fill="#d8d8d8">搜索</text><rect x="1434.7" y="61" width="25" height="14" rx="2.5" fill="#2a2a2a" stroke="#4e4a46" stroke-width="0.9"/><text x="1447.2" y="70.5" text-anchor="middle" class="ui" font-size="6.3" fill="#d8d8d8">结果表</text><rect x="1463" y="61" width="25" height="14" rx="2.5" fill="#2a2a2a" stroke="#4e4a46" stroke-width="0.9"/><text x="1475.5" y="70.5" text-anchor="middle" class="ui" font-size="6.3" fill="#d8d8d8">绘图</text><rect x="1434.7" y="80.6" width="25" height="14" rx="2.5" fill="#2a2a2a" stroke="#4e4a46" stroke-width="0.9"/><rect x="1463" y="80.6" width="25" height="14" rx="2.5" fill="#2a2a2a" stroke="#4e4a46" stroke-width="0.9"/><text x="1475.5" y="90.1" text-anchor="middle" class="ui" font-size="6.3" fill="#d8d8d8">More...</text><rect x="1443" y="83.5" width="8" height="7" fill="none" stroke="#ccc" stroke-width="0.6" stroke-dasharray="1,1"/><circle cx="1447.5" cy="87" r="2" fill="none" stroke="#ddd" stroke-width="0.7"/><line x1="1449" y1="88.6" x2="1451" y2="90.6" stroke="#ddd" stroke-width="0.9"/><line x1="1432" y1="77.6" x2="1490" y2="77.6" stroke="#444" stroke-width="0.8"/><line x1="1432" y1="99" x2="1490" y2="99" stroke="#3a3a3a" stroke-width="0.8"/><rect x="1428.2" y="199.5" width="1.4" height="1.4" fill="#bbb"/><rect x="1428.2" y="203.10000000000002" width="1.4" height="1.4" fill="#bbb"/><rect x="1428.2" y="206.5" width="1.4" height="1.4" fill="#bbb"/><rect x="736" y="394.2" width="755" height="32.3" fill="#252525"/><rect x="737" y="395" width="35.5" height="30.5" fill="#d0d0d0"/><rect x="737" y="395" width="35.5" height="8" fill="#f5e52a"/><text x="739" y="401.8" class="ui" font-size="6.3" fill="#222">Ch 1</text><text x="739" y="409.5" class="ui" font-size="6" fill="#555">440 mV/div</text><text x="739" y="416.8" class="ui" font-size="6" fill="#555">1 MΩ</text><text x="739" y="424.1" class="ui" font-size="6" fill="#555">1 GHz</text><path d="M765,418.5 h2 v1.5 h2 v2 h-2" fill="none" stroke="#333" stroke-width="1"/><rect x="1006.2" y="395.3" width="15.5" height="30" rx="2.5" fill="#2d2d2d" stroke="#4a4540" stroke-width="0.8"/><rect x="1008.2" y="397.8" width="11.5" height="1.2" fill="#2ec4d0"/><text x="1013.95" y="415.5" text-anchor="middle" class="ui" font-size="8.5" fill="#d8d8d8">2</text><rect x="1023.75" y="395.3" width="15.5" height="30" rx="2.5" fill="#2d2d2d" stroke="#4a4540" stroke-width="0.8"/><rect x="1025.75" y="397.8" width="11.5" height="1.2" fill="#d83c58"/><text x="1031.5" y="415.5" text-anchor="middle" class="ui" font-size="8.5" fill="#d8d8d8">3</text><rect x="1041.3" y="395.3" width="15.5" height="30" rx="2.5" fill="#2d2d2d" stroke="#4a4540" stroke-width="0.8"/><rect x="1043.3" y="397.8" width="11.5" height="1.2" fill="#8cc43a"/><text x="1049.05" y="415.5" text-anchor="middle" class="ui" font-size="8.5" fill="#d8d8d8">4</text><rect x="1058.8500000000001" y="395.3" width="15.5" height="30" rx="2.5" fill="#2d2d2d" stroke="#4a4540" stroke-width="0.8"/><rect x="1060.8500000000001" y="397.8" width="11.5" height="1.2" fill="#e08a2a"/><text x="1066.6000000000001" y="415.5" text-anchor="middle" class="ui" font-size="8.5" fill="#d8d8d8">5</text><rect x="1076.4" y="395.3" width="15.5" height="30" rx="2.5" fill="#2d2d2d" stroke="#4a4540" stroke-width="0.8"/><rect x="1078.4" y="397.8" width="11.5" height="1.2" fill="#3434b8"/><text x="1084.15" y="415.5" text-anchor="middle" class="ui" font-size="8.5" fill="#d8d8d8">6</text><rect x="1093.95" y="395.3" width="15.5" height="30" rx="2.5" fill="#2d2d2d" stroke="#4a4540" stroke-width="0.8"/><rect x="1095.95" y="397.8" width="11.5" height="1.2" fill="#d04aa8"/><text x="1101.7" y="415.5" text-anchor="middle" class="ui" font-size="8.5" fill="#d8d8d8">7</text><rect x="1111.5" y="395.3" width="15.5" height="30" rx="2.5" fill="#2d2d2d" stroke="#4a4540" stroke-width="0.8"/><rect x="1113.5" y="397.8" width="11.5" height="1.2" fill="#22c08a"/><text x="1119.25" y="415.5" text-anchor="middle" class="ui" font-size="8.5" fill="#d8d8d8">8</text><rect x="1135.6" y="395.3" width="15.5" height="30" rx="2.5" fill="#2d2d2d" stroke="#4a4540" stroke-width="0.8"/><rect x="1137.6" y="397.8" width="11.5" height="1.2" fill="#e08a20"/><text x="1143.35" y="414.5" text-anchor="middle" class="ui" font-size="6.5" fill="#cfcfcf">数学</text><rect x="1153.3" y="395.3" width="15.5" height="30" rx="2.5" fill="#2d2d2d" stroke="#4a4540" stroke-width="0.8"/><rect x="1155.3" y="397.8" width="11.5" height="1.2" fill="#c0c0d0"/><text x="1161.05" y="414.5" text-anchor="middle" class="ui" font-size="6.5" fill="#cfcfcf">参考</text><rect x="1171.2" y="395.3" width="15.5" height="30" rx="2.5" fill="#2d2d2d" stroke="#4a4540" stroke-width="0.8"/><rect x="1173.2" y="397.8" width="11.5" height="1.2" fill="#b040e0"/><text x="1178.95" y="414.5" text-anchor="middle" class="ui" font-size="6.5" fill="#cfcfcf">总线</text><rect x="1194.5" y="395.3" width="15.5" height="30" rx="2.5" fill="#2d2d2d" stroke="#4a4540" stroke-width="0.8"/><rect x="1196.5" y="397.8" width="11.5" height="1.2" fill="#4a4a4a"/><text x="1202.25" y="414.5" text-anchor="middle" class="ui" font-size="6.5" fill="#cfcfcf">DVM</text><rect x="1214.5" y="395.3" width="15.5" height="30" rx="2.5" fill="#2d2d2d" stroke="#4a4540" stroke-width="0.8"/><rect x="1216.5" y="397.8" width="11.5" height="1.2" fill="#4a4a4a"/><text x="1222.25" y="414.5" text-anchor="middle" class="ui" font-size="6.5" fill="#cfcfcf">AFG</text><rect x="1130.8" y="396" width="1" height="29" fill="#3c3c3c"/><rect x="1190.0" y="396" width="1" height="29" fill="#3c3c3c"/><rect x="1233.9" y="396" width="1" height="29" fill="#3c3c3c"/><rect x="1239.8" y="395.8" width="76.79999999999995" height="6.9" fill="#5a5a5a"/><rect x="1239.8" y="402.7" width="76.79999999999995" height="23" fill="#c9c9c9"/><text x="1241.3" y="401.6" class="ui" font-size="6.3" fill="#f0f0f0">水平</text><rect x="1319.6" y="395.8" width="62.200000000000045" height="6.9" fill="#5a5a5a"/><rect x="1319.6" y="402.7" width="62.200000000000045" height="23" fill="#c9c9c9"/><text x="1321.1" y="401.6" class="ui" font-size="6.3" fill="#f0f0f0">触发</text><rect x="1384.2" y="395.8" width="58.299999999999955" height="6.9" fill="#5a5a5a"/><rect x="1384.2" y="402.7" width="58.299999999999955" height="23" fill="#c9c9c9"/><text x="1385.7" y="401.6" class="ui" font-size="6.3" fill="#f0f0f0">采集</text><text x="1241" y="410.0" class="ui" font-size="6" fill="#333">110 ns/div</text><text x="1283" y="410.0" class="ui" font-size="6" fill="#333">1.1 μs</text><text x="1241" y="417.2" class="ui" font-size="6" fill="#333">SR: 6.25 GS/s</text><text x="1283" y="417.2" class="ui" font-size="6" fill="#333">160 ps/pt</text><text x="1241" y="424.4" class="ui" font-size="6" fill="#333">RL: 6.875 kpts</text><text x="1289.5" y="424.4" class="ui" font-size="6" fill="#333">23.5%</text><rect x="1283.5" y="418" width="4" height="4.5" rx="1" fill="#d2701e"/><rect x="1322" y="404.7" width="11.5" height="6.4" rx="2" fill="#f3e640" stroke="#777" stroke-width="0.5"/><text x="1327.7" y="410" text-anchor="middle" class="ui" font-size="5.5" fill="#333">1</text><path d="M1338.5,410.5 l2,0 l3,-4 l2,0" fill="none" stroke="#6a6ab0" stroke-width="0.8"/><text x="1348" y="410" class="ui" font-size="6" fill="#666">1.65 V</text><text x="1386" y="410.0" class="ui" font-size="6" fill="#333">自动,</text><text x="1418" y="410.0" class="ui" font-size="6" fill="#333">分析</text><text x="1386" y="417.2" class="ui" font-size="6" fill="#333">采样: 4 bits</text><text x="1386" y="424.4" class="ui" font-size="6" fill="#333">7,233 计数</text><rect x="1452" y="395" width="35" height="13.5" rx="2" fill="#22cc22"/><text x="1469.5" y="404.3" text-anchor="middle" class="ui" font-size="6.3" font-weight="bold" fill="#fff">已触发</text><rect x="1451" y="412" width="36" height="13.5" rx="1.5" fill="#d0d0d0"/><text x="1469" y="418" text-anchor="middle" class="ui" font-size="5.8" fill="#666">09 Jun 2020</text><text x="1469" y="424.5" text-anchor="middle" class="ui" font-size="5.8" fill="#666">4:15:00 PM</text><rect x="736.4" y="392.5" width="689.6" height="1.8" fill="#a0a0a0"/><rect x="1292" y="403.5" width="200" height="29.5" fill="#ffffff" opacity="0.28"/><text x="1307" y="424" font-family="Liberation Sans" font-size="20" fill="#5aa04a" opacity="0.55" letter-spacing="-0.2">www.cntronics.com</text></svg>
</body></html>
